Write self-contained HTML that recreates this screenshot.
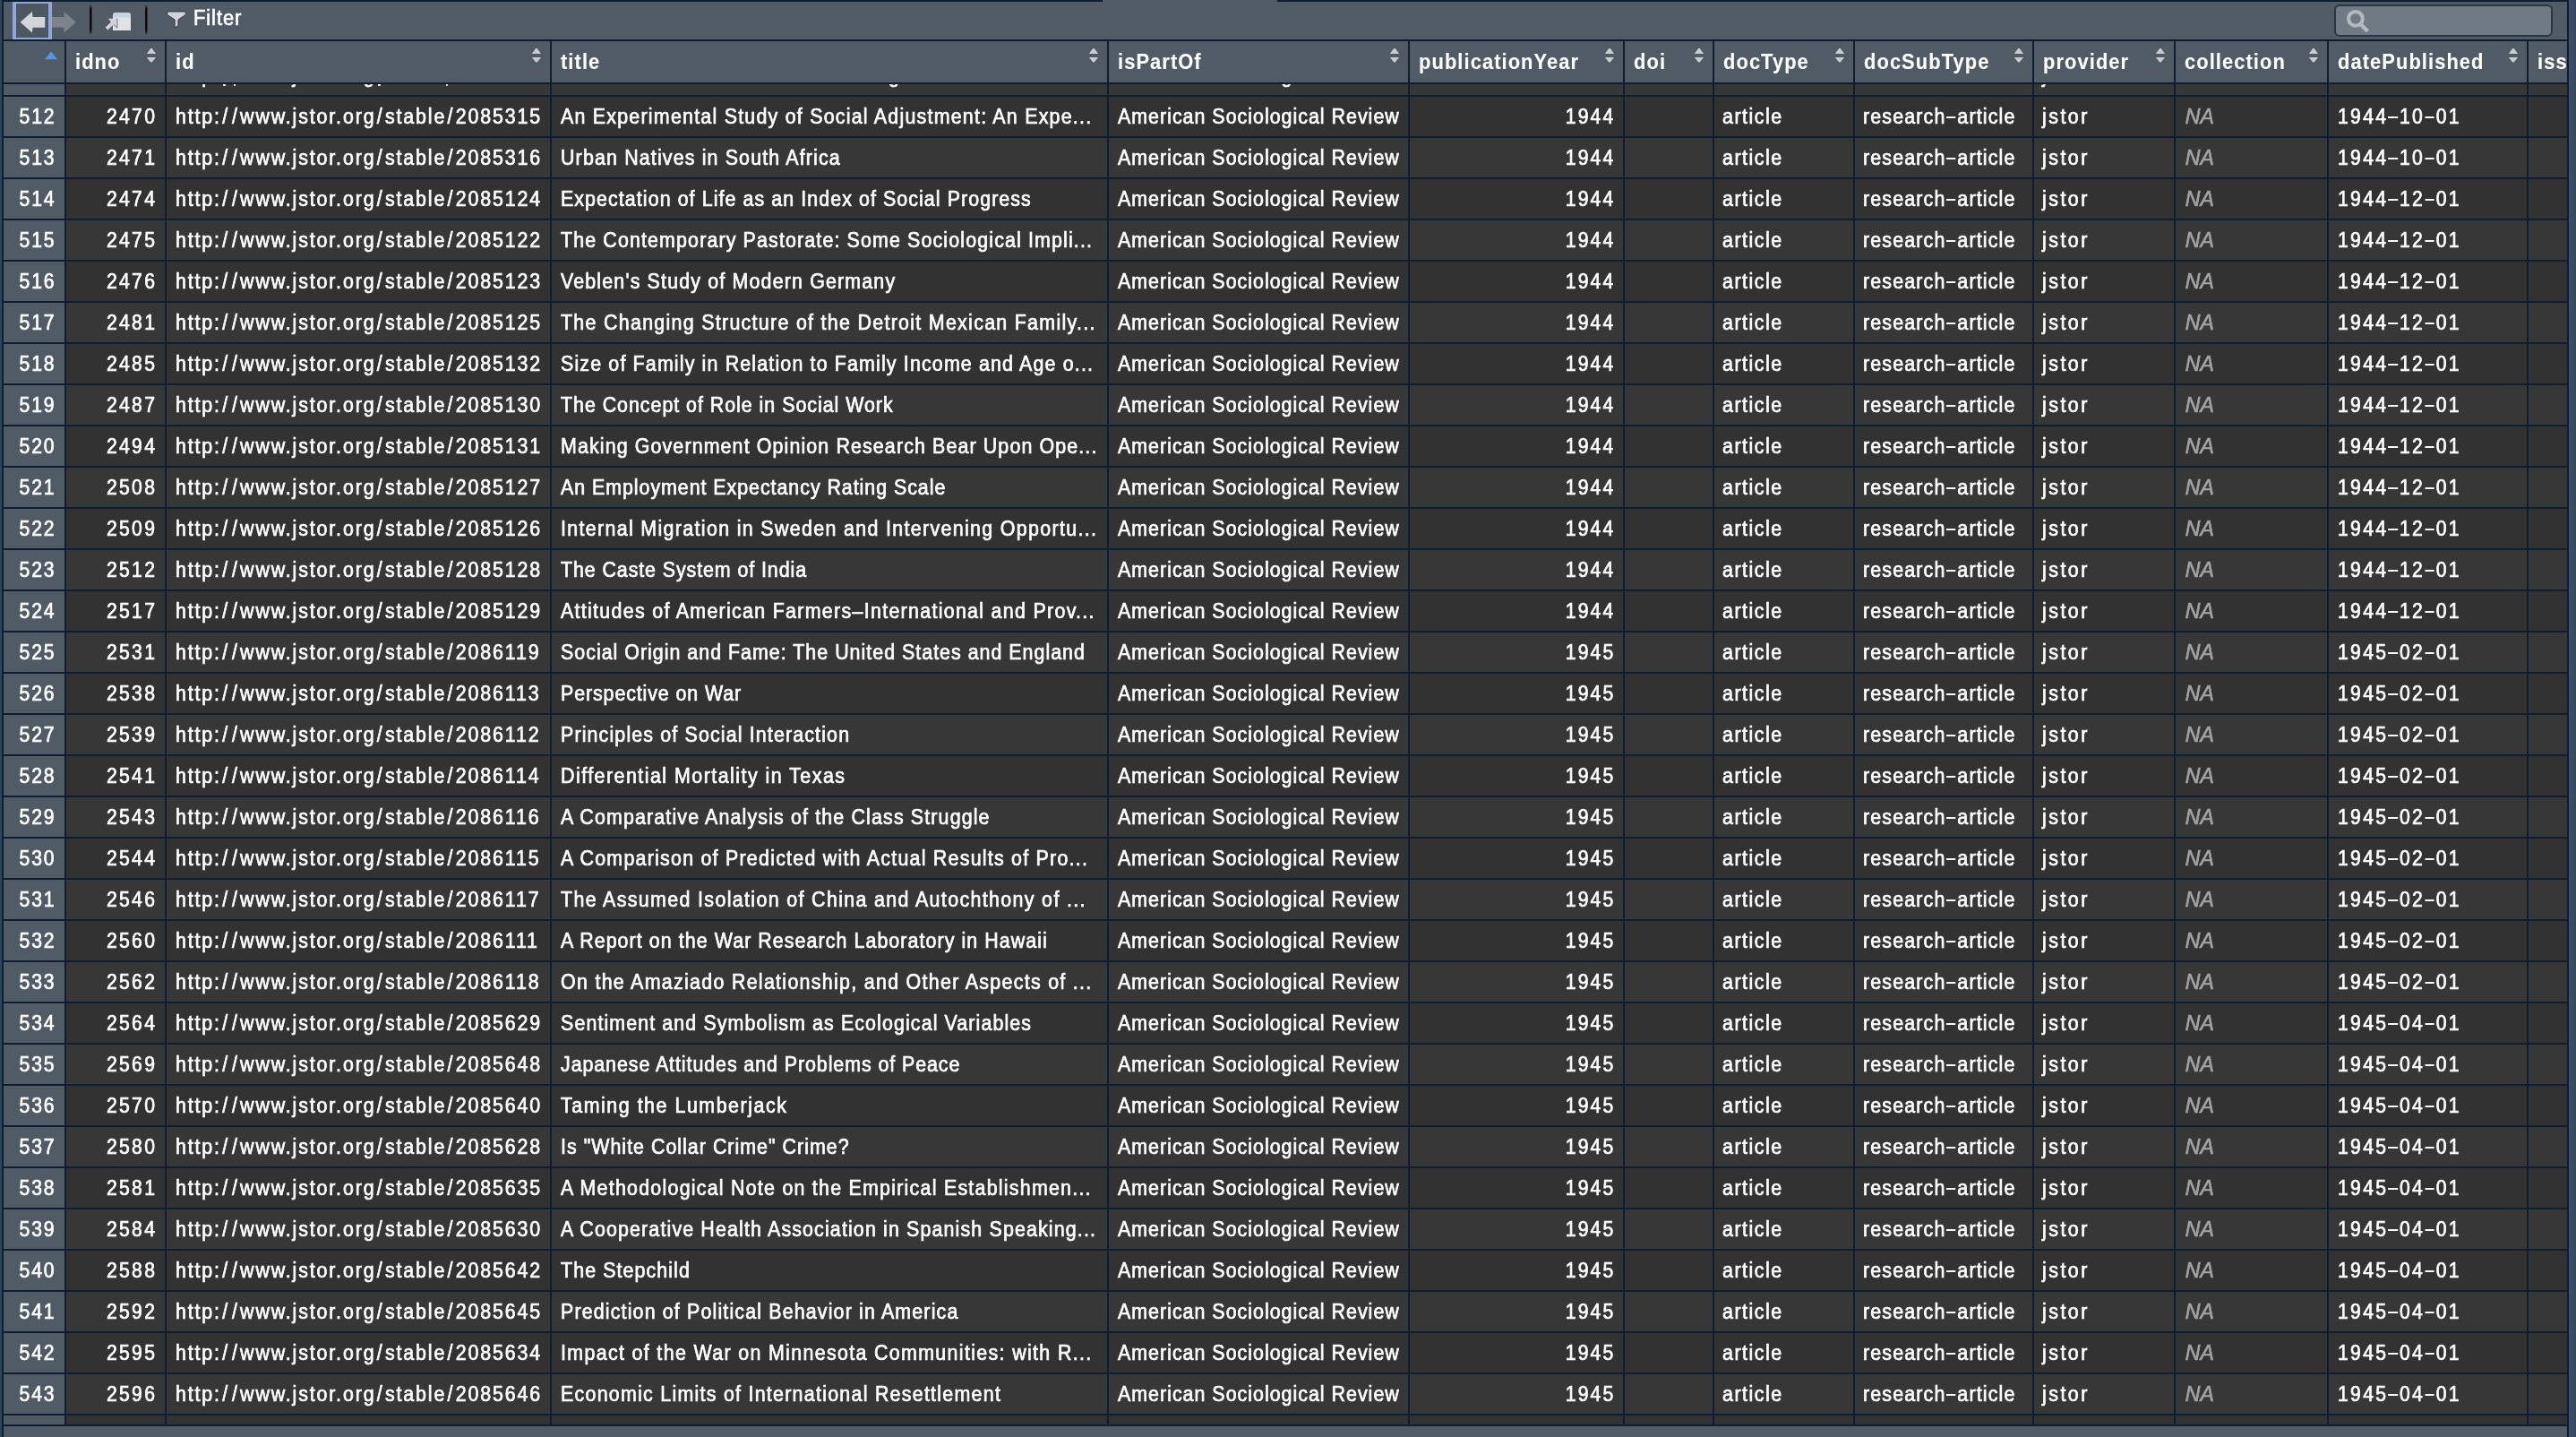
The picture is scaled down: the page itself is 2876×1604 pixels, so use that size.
<!DOCTYPE html><html><head><meta charset="utf-8"><style>
*{box-sizing:border-box}
html,body{margin:0;padding:0}
body{width:2876px;height:1604px;overflow:hidden;position:relative;-webkit-font-smoothing:antialiased;background:#33455d;font-family:"Liberation Sans",sans-serif;color:#fff}
.a{position:absolute}
.s{display:inline-block;white-space:pre;-webkit-text-stroke:0.7px currentColor}
.c{position:absolute;top:0;height:44px;overflow:hidden;font-size:23px;line-height:44px}
.c .t{position:absolute;top:0;left:0;right:0;height:44px;white-space:pre}
.h{position:absolute;top:0;height:46px;background:#515b66;overflow:hidden}
.h .t{position:absolute;left:10px;top:0;line-height:46px;font-size:23px;font-weight:bold;white-space:pre}
.h .s{-webkit-text-stroke:0.1px currentColor}
.sort{position:absolute;top:7px;width:12px;height:18px}
.na{color:#a2a2a2;font-style:italic}
.sl{font-style:normal;margin:0 1.5px}
.dh{display:inline-block;width:11.2px;height:2px;background:currentColor;vertical-align:5.6px;margin:0 2.3px 0 0.3px}
</style></head><body><div id="root" style="position:absolute;left:0;top:0;width:2876px;height:1604px;overflow:hidden;will-change:transform">

<div class="a" style="left:2868px;top:0;width:8px;height:1604px;background:linear-gradient(to right,#3e4f67,#36475e)"></div>
<div class="a" style="left:2px;top:0;width:2866px;height:1604px;background:#0f1d30"></div>
<div class="a" style="left:4px;top:2px;width:2862px;height:42px;background:#515b66"></div>
<div class="a" style="left:1231px;top:0;width:195px;height:2px;background:#515b66"></div>
<div class="a" style="left:14px;top:2px;width:44px;height:42px;border-style:solid;border-color:#8fa8db;border-width:2px 4px;background:#4e5863"></div>
<svg class="a" style="left:0;top:0" width="300" height="46" viewBox="0 0 300 46">
<defs><linearGradient id="sep" x1="0" y1="0" x2="0" y2="1"><stop offset="0" stop-color="#000" stop-opacity="0"/><stop offset="0.15" stop-color="#000"/><stop offset="0.85" stop-color="#000"/><stop offset="1" stop-color="#000" stop-opacity="0"/></linearGradient></defs>
<polygon points="22.6,24.8 35.9,13.1 36.5,18.9 50.2,18.9 50.2,30.7 36.5,30.7 35.9,36.5" fill="#d4d5d7"/>
<polygon points="58,18.9 71.5,18.9 71.5,13.1 84.8,24.8 71.5,36.5 71.5,30.7 58,30.7" fill="#7c838b"/>
<rect x="100.2" y="5" width="2.2" height="34" fill="url(#sep)"/>
<rect x="162.2" y="5" width="2.2" height="34" fill="url(#sep)"/>
<path d="M125.9,33.9 V17.6 A3.7,3.7 0 0 1 129.6,13.9 H142.3 A3.7,3.7 0 0 1 146,17.6 V33.9 Z" fill="#e2e2e4"/>
<path d="M125.9,19.6 V17.6 A3.7,3.7 0 0 1 129.6,13.9 H142.3 A3.7,3.7 0 0 1 146,17.6 V19.6 Z" fill="#c6d3e3"/>
<polygon points="120.6,20.8 130.4,20.8 130.4,30.6 126.8,27.2 120.4,33.5 117.6,30.7 124,24.4" fill="#d2d2d6"/><path d="M130.9,20.6 V31.2 L126.8,27.6" fill="none" stroke="#5b6672" stroke-width="0.9" stroke-linejoin="round"/>
<polygon points="186.8,13 207.2,13 207.2,16.5 199,21.9 199,28.9 195.1,30.8 195.1,21.9 186.8,16.5" fill="#d2d4d7" stroke="#2f3a46" stroke-width="1" stroke-linejoin="round"/>
</svg>
<div class="a" style="left:216px;top:0px;height:40px;line-height:40px;font-size:23px;color:#fff"><span class="s " style="transform:scaleX(0.95);transform-origin:left;letter-spacing:1.0px">Filter</span></div>
<div class="a" style="left:2606px;top:5px;width:244px;height:36px;border:2px solid #2a3645;border-radius:6px;background:#6f7a84"></div>
<svg class="a" style="left:2600px;top:0" width="60" height="46" viewBox="0 0 60 46"><circle cx="29.9" cy="20.8" r="7.9" fill="none" stroke="#b4b9be" stroke-width="4"/><line x1="34.5" y1="26" x2="43.5" y2="35" stroke="#b4b9be" stroke-width="4.5"/></svg>
<div class="a" style="left:4px;top:1592px;width:2862px;height:12px;background:#515b66"></div>
<div class="a" style="left:0;top:46px;width:2866px;height:46px;overflow:hidden">
<div class="h" style="left:4px;width:68px"><svg class="a" style="left:46px;top:11px" width="20" height="12" viewBox="0 0 20 12"><polygon points="0,9.2 6.3,0.9 7.5,0.9 14.2,9.2" fill="#4f97e4"/></svg></div>
<div class="h" style="left:74px;width:110px"><div class="t"><span class="s " style="transform:scaleX(0.95);transform-origin:left;letter-spacing:1.15px">idno</span></div><svg class="a" style="left:89px;top:7px" width="12" height="18" viewBox="0 0 12 18"><polygon points="0.8,6.9 5.2,0.9 6.7,0.9 11.1,6.9" fill="#c8ccd1"/><polygon points="0.8,10.9 11.1,10.9 6.7,16.6 5.2,16.6" fill="#c8ccd1"/></svg></div>
<div class="h" style="left:186px;width:428px"><div class="t"><span class="s " style="transform:scaleX(0.95);transform-origin:left;letter-spacing:1.15px">id</span></div><svg class="a" style="left:407px;top:7px" width="12" height="18" viewBox="0 0 12 18"><polygon points="0.8,6.9 5.2,0.9 6.7,0.9 11.1,6.9" fill="#c8ccd1"/><polygon points="0.8,10.9 11.1,10.9 6.7,16.6 5.2,16.6" fill="#c8ccd1"/></svg></div>
<div class="h" style="left:616px;width:620px"><div class="t"><span class="s " style="transform:scaleX(0.95);transform-origin:left;letter-spacing:1.15px">title</span></div><svg class="a" style="left:599px;top:7px" width="12" height="18" viewBox="0 0 12 18"><polygon points="0.8,6.9 5.2,0.9 6.7,0.9 11.1,6.9" fill="#c8ccd1"/><polygon points="0.8,10.9 11.1,10.9 6.7,16.6 5.2,16.6" fill="#c8ccd1"/></svg></div>
<div class="h" style="left:1238px;width:334px"><div class="t"><span class="s " style="transform:scaleX(0.95);transform-origin:left;letter-spacing:1.15px">isPartOf</span></div><svg class="a" style="left:313px;top:7px" width="12" height="18" viewBox="0 0 12 18"><polygon points="0.8,6.9 5.2,0.9 6.7,0.9 11.1,6.9" fill="#c8ccd1"/><polygon points="0.8,10.9 11.1,10.9 6.7,16.6 5.2,16.6" fill="#c8ccd1"/></svg></div>
<div class="h" style="left:1574px;width:238px"><div class="t"><span class="s " style="transform:scaleX(0.95);transform-origin:left;letter-spacing:1.15px">publicationYear</span></div><svg class="a" style="left:217px;top:7px" width="12" height="18" viewBox="0 0 12 18"><polygon points="0.8,6.9 5.2,0.9 6.7,0.9 11.1,6.9" fill="#c8ccd1"/><polygon points="0.8,10.9 11.1,10.9 6.7,16.6 5.2,16.6" fill="#c8ccd1"/></svg></div>
<div class="h" style="left:1814px;width:98px"><div class="t"><span class="s " style="transform:scaleX(0.95);transform-origin:left;letter-spacing:1.15px">doi</span></div><svg class="a" style="left:77px;top:7px" width="12" height="18" viewBox="0 0 12 18"><polygon points="0.8,6.9 5.2,0.9 6.7,0.9 11.1,6.9" fill="#c8ccd1"/><polygon points="0.8,10.9 11.1,10.9 6.7,16.6 5.2,16.6" fill="#c8ccd1"/></svg></div>
<div class="h" style="left:1914px;width:155px"><div class="t"><span class="s " style="transform:scaleX(0.95);transform-origin:left;letter-spacing:1.15px">docType</span></div><svg class="a" style="left:134px;top:7px" width="12" height="18" viewBox="0 0 12 18"><polygon points="0.8,6.9 5.2,0.9 6.7,0.9 11.1,6.9" fill="#c8ccd1"/><polygon points="0.8,10.9 11.1,10.9 6.7,16.6 5.2,16.6" fill="#c8ccd1"/></svg></div>
<div class="h" style="left:2071px;width:198px"><div class="t"><span class="s " style="transform:scaleX(0.95);transform-origin:left;letter-spacing:1.15px">docSubType</span></div><svg class="a" style="left:177px;top:7px" width="12" height="18" viewBox="0 0 12 18"><polygon points="0.8,6.9 5.2,0.9 6.7,0.9 11.1,6.9" fill="#c8ccd1"/><polygon points="0.8,10.9 11.1,10.9 6.7,16.6 5.2,16.6" fill="#c8ccd1"/></svg></div>
<div class="h" style="left:2271px;width:156px"><div class="t"><span class="s " style="transform:scaleX(0.95);transform-origin:left;letter-spacing:1.15px">provider</span></div><svg class="a" style="left:135px;top:7px" width="12" height="18" viewBox="0 0 12 18"><polygon points="0.8,6.9 5.2,0.9 6.7,0.9 11.1,6.9" fill="#c8ccd1"/><polygon points="0.8,10.9 11.1,10.9 6.7,16.6 5.2,16.6" fill="#c8ccd1"/></svg></div>
<div class="h" style="left:2429px;width:169px"><div class="t"><span class="s " style="transform:scaleX(0.95);transform-origin:left;letter-spacing:1.15px">collection</span></div><svg class="a" style="left:148px;top:7px" width="12" height="18" viewBox="0 0 12 18"><polygon points="0.8,6.9 5.2,0.9 6.7,0.9 11.1,6.9" fill="#c8ccd1"/><polygon points="0.8,10.9 11.1,10.9 6.7,16.6 5.2,16.6" fill="#c8ccd1"/></svg></div>
<div class="h" style="left:2600px;width:221px"><div class="t"><span class="s " style="transform:scaleX(0.95);transform-origin:left;letter-spacing:1.15px">datePublished</span></div><svg class="a" style="left:200px;top:7px" width="12" height="18" viewBox="0 0 12 18"><polygon points="0.8,6.9 5.2,0.9 6.7,0.9 11.1,6.9" fill="#c8ccd1"/><polygon points="0.8,10.9 11.1,10.9 6.7,16.6 5.2,16.6" fill="#c8ccd1"/></svg></div>
<div class="h" style="left:2823px;width:77px"><div class="t"><span class="s " style="transform:scaleX(0.95);transform-origin:left;letter-spacing:1.15px">iss</span></div></div>
</div>
<div class="a" style="left:0;top:94px;width:2866px;height:1496px;overflow:hidden">
<div class="a" style="left:0;top:-32px;width:2866px;height:44px"><div class="c" style="left:4px;width:68px;background:#515b66"><div class="t" style="right:9px;text-align:right"><span class="s " style="transform:scaleX(0.92);transform-origin:right;letter-spacing:2.05px">511</span></div></div><div class="c" style="left:74px;width:110px;background:#373737"><div class="t" style="right:8.5px;text-align:right"><span class="s " style="transform:scaleX(0.92);transform-origin:right;letter-spacing:2.533px">2469</span></div></div><div class="c" style="left:186px;width:428px;background:#373737"><div class="t" style="left:10px"><span class="s " style="transform:scaleX(0.93);transform-origin:left;letter-spacing:1.994px">http:<i class="sl">/</i><i class="sl">/</i>www.jstor.org<i class="sl">/</i>stable<i class="sl">/</i>2085314</span></div></div><div class="c" style="left:616px;width:620px;background:#373737"><div class="t" style="left:376px"><span class="s " style="transform:scaleX(0.93);transform-origin:left;letter-spacing:1.2px">g</span></div></div><div class="c" style="left:1238px;width:334px;background:#373737"><div class="t" style="left:10px"><span class="s " style="transform:scaleX(0.93);transform-origin:left;letter-spacing:1.084px">American Sociological Review</span></div></div><div class="c" style="left:1574px;width:238px;background:#373737"><div class="t" style="right:8.8px;text-align:right"><span class="s " style="transform:scaleX(0.92);transform-origin:right;letter-spacing:2.3px">1944</span></div></div><div class="c" style="left:1814px;width:98px;background:#373737"></div><div class="c" style="left:1914px;width:155px;background:#373737"><div class="t" style="left:9px"><span class="s " style="transform:scaleX(0.93);transform-origin:left;letter-spacing:1.62px">article</span></div></div><div class="c" style="left:2071px;width:198px;background:#373737"><div class="t" style="left:9px"><span class="s " style="transform:scaleX(0.93);transform-origin:left;letter-spacing:1.25px">research<i class="dh"></i>article</span></div></div><div class="c" style="left:2271px;width:156px;background:#373737"><div class="t" style="left:9px"><span class="s " style="transform:scaleX(0.93);transform-origin:left;letter-spacing:2.667px">jstor</span></div></div><div class="c" style="left:2429px;width:169px;background:#373737"><div class="t na" style="left:10.7px"><span class="s " style="transform:scaleX(1.0);transform-origin:left;letter-spacing:0.3px">NA</span></div></div><div class="c" style="left:2600px;width:221px;background:#373737"><div class="t" style="left:10px"><span class="s " style="transform:scaleX(0.92);transform-origin:left;letter-spacing:2.5px">1944<i class="dh"></i>10<i class="dh"></i>01</span></div></div><div class="c" style="left:2823px;width:77px;background:#373737"></div></div>
<div class="a" style="left:0;top:14px;width:2866px;height:44px"><div class="c" style="left:4px;width:68px;background:#515b66"><div class="t" style="right:9px;text-align:right"><span class="s " style="transform:scaleX(0.92);transform-origin:right;letter-spacing:2.05px">512</span></div></div><div class="c" style="left:74px;width:110px;background:#323232"><div class="t" style="right:8.5px;text-align:right"><span class="s " style="transform:scaleX(0.92);transform-origin:right;letter-spacing:2.533px">2470</span></div></div><div class="c" style="left:186px;width:428px;background:#323232"><div class="t" style="left:10px"><span class="s " style="transform:scaleX(0.93);transform-origin:left;letter-spacing:1.994px">http:<i class="sl">/</i><i class="sl">/</i>www.jstor.org<i class="sl">/</i>stable<i class="sl">/</i>2085315</span></div></div><div class="c" style="left:616px;width:620px;background:#323232"><div class="t" style="left:10px"><span class="s" style="transform:scaleX(0.93);transform-origin:left;letter-spacing:1.327px">An Experimental Study of Social Adjustment: An Expe...</span></div></div><div class="c" style="left:1238px;width:334px;background:#323232"><div class="t" style="left:10px"><span class="s " style="transform:scaleX(0.93);transform-origin:left;letter-spacing:1.084px">American Sociological Review</span></div></div><div class="c" style="left:1574px;width:238px;background:#323232"><div class="t" style="right:8.8px;text-align:right"><span class="s " style="transform:scaleX(0.92);transform-origin:right;letter-spacing:2.3px">1944</span></div></div><div class="c" style="left:1814px;width:98px;background:#323232"></div><div class="c" style="left:1914px;width:155px;background:#323232"><div class="t" style="left:9px"><span class="s " style="transform:scaleX(0.93);transform-origin:left;letter-spacing:1.62px">article</span></div></div><div class="c" style="left:2071px;width:198px;background:#323232"><div class="t" style="left:9px"><span class="s " style="transform:scaleX(0.93);transform-origin:left;letter-spacing:1.25px">research<i class="dh"></i>article</span></div></div><div class="c" style="left:2271px;width:156px;background:#323232"><div class="t" style="left:9px"><span class="s " style="transform:scaleX(0.93);transform-origin:left;letter-spacing:2.667px">jstor</span></div></div><div class="c" style="left:2429px;width:169px;background:#323232"><div class="t na" style="left:10.7px"><span class="s " style="transform:scaleX(1.0);transform-origin:left;letter-spacing:0.3px">NA</span></div></div><div class="c" style="left:2600px;width:221px;background:#323232"><div class="t" style="left:10px"><span class="s " style="transform:scaleX(0.92);transform-origin:left;letter-spacing:2.5px">1944<i class="dh"></i>10<i class="dh"></i>01</span></div></div><div class="c" style="left:2823px;width:77px;background:#323232"></div></div>
<div class="a" style="left:0;top:60px;width:2866px;height:44px"><div class="c" style="left:4px;width:68px;background:#515b66"><div class="t" style="right:9px;text-align:right"><span class="s " style="transform:scaleX(0.92);transform-origin:right;letter-spacing:2.05px">513</span></div></div><div class="c" style="left:74px;width:110px;background:#373737"><div class="t" style="right:8.5px;text-align:right"><span class="s " style="transform:scaleX(0.92);transform-origin:right;letter-spacing:2.533px">2471</span></div></div><div class="c" style="left:186px;width:428px;background:#373737"><div class="t" style="left:10px"><span class="s " style="transform:scaleX(0.93);transform-origin:left;letter-spacing:1.994px">http:<i class="sl">/</i><i class="sl">/</i>www.jstor.org<i class="sl">/</i>stable<i class="sl">/</i>2085316</span></div></div><div class="c" style="left:616px;width:620px;background:#373737"><div class="t" style="left:10px"><span class="s" style="transform:scaleX(0.93);transform-origin:left;letter-spacing:1.242px">Urban Natives in South Africa</span></div></div><div class="c" style="left:1238px;width:334px;background:#373737"><div class="t" style="left:10px"><span class="s " style="transform:scaleX(0.93);transform-origin:left;letter-spacing:1.084px">American Sociological Review</span></div></div><div class="c" style="left:1574px;width:238px;background:#373737"><div class="t" style="right:8.8px;text-align:right"><span class="s " style="transform:scaleX(0.92);transform-origin:right;letter-spacing:2.3px">1944</span></div></div><div class="c" style="left:1814px;width:98px;background:#373737"></div><div class="c" style="left:1914px;width:155px;background:#373737"><div class="t" style="left:9px"><span class="s " style="transform:scaleX(0.93);transform-origin:left;letter-spacing:1.62px">article</span></div></div><div class="c" style="left:2071px;width:198px;background:#373737"><div class="t" style="left:9px"><span class="s " style="transform:scaleX(0.93);transform-origin:left;letter-spacing:1.25px">research<i class="dh"></i>article</span></div></div><div class="c" style="left:2271px;width:156px;background:#373737"><div class="t" style="left:9px"><span class="s " style="transform:scaleX(0.93);transform-origin:left;letter-spacing:2.667px">jstor</span></div></div><div class="c" style="left:2429px;width:169px;background:#373737"><div class="t na" style="left:10.7px"><span class="s " style="transform:scaleX(1.0);transform-origin:left;letter-spacing:0.3px">NA</span></div></div><div class="c" style="left:2600px;width:221px;background:#373737"><div class="t" style="left:10px"><span class="s " style="transform:scaleX(0.92);transform-origin:left;letter-spacing:2.5px">1944<i class="dh"></i>10<i class="dh"></i>01</span></div></div><div class="c" style="left:2823px;width:77px;background:#373737"></div></div>
<div class="a" style="left:0;top:106px;width:2866px;height:44px"><div class="c" style="left:4px;width:68px;background:#515b66"><div class="t" style="right:9px;text-align:right"><span class="s " style="transform:scaleX(0.92);transform-origin:right;letter-spacing:2.05px">514</span></div></div><div class="c" style="left:74px;width:110px;background:#323232"><div class="t" style="right:8.5px;text-align:right"><span class="s " style="transform:scaleX(0.92);transform-origin:right;letter-spacing:2.533px">2474</span></div></div><div class="c" style="left:186px;width:428px;background:#323232"><div class="t" style="left:10px"><span class="s " style="transform:scaleX(0.93);transform-origin:left;letter-spacing:1.994px">http:<i class="sl">/</i><i class="sl">/</i>www.jstor.org<i class="sl">/</i>stable<i class="sl">/</i>2085124</span></div></div><div class="c" style="left:616px;width:620px;background:#323232"><div class="t" style="left:10px"><span class="s" style="transform:scaleX(0.93);transform-origin:left;letter-spacing:1.158px">Expectation of Life as an Index of Social Progress</span></div></div><div class="c" style="left:1238px;width:334px;background:#323232"><div class="t" style="left:10px"><span class="s " style="transform:scaleX(0.93);transform-origin:left;letter-spacing:1.084px">American Sociological Review</span></div></div><div class="c" style="left:1574px;width:238px;background:#323232"><div class="t" style="right:8.8px;text-align:right"><span class="s " style="transform:scaleX(0.92);transform-origin:right;letter-spacing:2.3px">1944</span></div></div><div class="c" style="left:1814px;width:98px;background:#323232"></div><div class="c" style="left:1914px;width:155px;background:#323232"><div class="t" style="left:9px"><span class="s " style="transform:scaleX(0.93);transform-origin:left;letter-spacing:1.62px">article</span></div></div><div class="c" style="left:2071px;width:198px;background:#323232"><div class="t" style="left:9px"><span class="s " style="transform:scaleX(0.93);transform-origin:left;letter-spacing:1.25px">research<i class="dh"></i>article</span></div></div><div class="c" style="left:2271px;width:156px;background:#323232"><div class="t" style="left:9px"><span class="s " style="transform:scaleX(0.93);transform-origin:left;letter-spacing:2.667px">jstor</span></div></div><div class="c" style="left:2429px;width:169px;background:#323232"><div class="t na" style="left:10.7px"><span class="s " style="transform:scaleX(1.0);transform-origin:left;letter-spacing:0.3px">NA</span></div></div><div class="c" style="left:2600px;width:221px;background:#323232"><div class="t" style="left:10px"><span class="s " style="transform:scaleX(0.92);transform-origin:left;letter-spacing:2.5px">1944<i class="dh"></i>12<i class="dh"></i>01</span></div></div><div class="c" style="left:2823px;width:77px;background:#323232"></div></div>
<div class="a" style="left:0;top:152px;width:2866px;height:44px"><div class="c" style="left:4px;width:68px;background:#515b66"><div class="t" style="right:9px;text-align:right"><span class="s " style="transform:scaleX(0.92);transform-origin:right;letter-spacing:2.05px">515</span></div></div><div class="c" style="left:74px;width:110px;background:#373737"><div class="t" style="right:8.5px;text-align:right"><span class="s " style="transform:scaleX(0.92);transform-origin:right;letter-spacing:2.533px">2475</span></div></div><div class="c" style="left:186px;width:428px;background:#373737"><div class="t" style="left:10px"><span class="s " style="transform:scaleX(0.93);transform-origin:left;letter-spacing:1.994px">http:<i class="sl">/</i><i class="sl">/</i>www.jstor.org<i class="sl">/</i>stable<i class="sl">/</i>2085122</span></div></div><div class="c" style="left:616px;width:620px;background:#373737"><div class="t" style="left:10px"><span class="s" style="transform:scaleX(0.93);transform-origin:left;letter-spacing:1.224px">The Contemporary Pastorate: Some Sociological Impli...</span></div></div><div class="c" style="left:1238px;width:334px;background:#373737"><div class="t" style="left:10px"><span class="s " style="transform:scaleX(0.93);transform-origin:left;letter-spacing:1.084px">American Sociological Review</span></div></div><div class="c" style="left:1574px;width:238px;background:#373737"><div class="t" style="right:8.8px;text-align:right"><span class="s " style="transform:scaleX(0.92);transform-origin:right;letter-spacing:2.3px">1944</span></div></div><div class="c" style="left:1814px;width:98px;background:#373737"></div><div class="c" style="left:1914px;width:155px;background:#373737"><div class="t" style="left:9px"><span class="s " style="transform:scaleX(0.93);transform-origin:left;letter-spacing:1.62px">article</span></div></div><div class="c" style="left:2071px;width:198px;background:#373737"><div class="t" style="left:9px"><span class="s " style="transform:scaleX(0.93);transform-origin:left;letter-spacing:1.25px">research<i class="dh"></i>article</span></div></div><div class="c" style="left:2271px;width:156px;background:#373737"><div class="t" style="left:9px"><span class="s " style="transform:scaleX(0.93);transform-origin:left;letter-spacing:2.667px">jstor</span></div></div><div class="c" style="left:2429px;width:169px;background:#373737"><div class="t na" style="left:10.7px"><span class="s " style="transform:scaleX(1.0);transform-origin:left;letter-spacing:0.3px">NA</span></div></div><div class="c" style="left:2600px;width:221px;background:#373737"><div class="t" style="left:10px"><span class="s " style="transform:scaleX(0.92);transform-origin:left;letter-spacing:2.5px">1944<i class="dh"></i>12<i class="dh"></i>01</span></div></div><div class="c" style="left:2823px;width:77px;background:#373737"></div></div>
<div class="a" style="left:0;top:198px;width:2866px;height:44px"><div class="c" style="left:4px;width:68px;background:#515b66"><div class="t" style="right:9px;text-align:right"><span class="s " style="transform:scaleX(0.92);transform-origin:right;letter-spacing:2.05px">516</span></div></div><div class="c" style="left:74px;width:110px;background:#323232"><div class="t" style="right:8.5px;text-align:right"><span class="s " style="transform:scaleX(0.92);transform-origin:right;letter-spacing:2.533px">2476</span></div></div><div class="c" style="left:186px;width:428px;background:#323232"><div class="t" style="left:10px"><span class="s " style="transform:scaleX(0.93);transform-origin:left;letter-spacing:1.994px">http:<i class="sl">/</i><i class="sl">/</i>www.jstor.org<i class="sl">/</i>stable<i class="sl">/</i>2085123</span></div></div><div class="c" style="left:616px;width:620px;background:#323232"><div class="t" style="left:10px"><span class="s" style="transform:scaleX(0.93);transform-origin:left;letter-spacing:1.252px">Veblen&#x27;s Study of Modern Germany</span></div></div><div class="c" style="left:1238px;width:334px;background:#323232"><div class="t" style="left:10px"><span class="s " style="transform:scaleX(0.93);transform-origin:left;letter-spacing:1.084px">American Sociological Review</span></div></div><div class="c" style="left:1574px;width:238px;background:#323232"><div class="t" style="right:8.8px;text-align:right"><span class="s " style="transform:scaleX(0.92);transform-origin:right;letter-spacing:2.3px">1944</span></div></div><div class="c" style="left:1814px;width:98px;background:#323232"></div><div class="c" style="left:1914px;width:155px;background:#323232"><div class="t" style="left:9px"><span class="s " style="transform:scaleX(0.93);transform-origin:left;letter-spacing:1.62px">article</span></div></div><div class="c" style="left:2071px;width:198px;background:#323232"><div class="t" style="left:9px"><span class="s " style="transform:scaleX(0.93);transform-origin:left;letter-spacing:1.25px">research<i class="dh"></i>article</span></div></div><div class="c" style="left:2271px;width:156px;background:#323232"><div class="t" style="left:9px"><span class="s " style="transform:scaleX(0.93);transform-origin:left;letter-spacing:2.667px">jstor</span></div></div><div class="c" style="left:2429px;width:169px;background:#323232"><div class="t na" style="left:10.7px"><span class="s " style="transform:scaleX(1.0);transform-origin:left;letter-spacing:0.3px">NA</span></div></div><div class="c" style="left:2600px;width:221px;background:#323232"><div class="t" style="left:10px"><span class="s " style="transform:scaleX(0.92);transform-origin:left;letter-spacing:2.5px">1944<i class="dh"></i>12<i class="dh"></i>01</span></div></div><div class="c" style="left:2823px;width:77px;background:#323232"></div></div>
<div class="a" style="left:0;top:244px;width:2866px;height:44px"><div class="c" style="left:4px;width:68px;background:#515b66"><div class="t" style="right:9px;text-align:right"><span class="s " style="transform:scaleX(0.92);transform-origin:right;letter-spacing:2.05px">517</span></div></div><div class="c" style="left:74px;width:110px;background:#373737"><div class="t" style="right:8.5px;text-align:right"><span class="s " style="transform:scaleX(0.92);transform-origin:right;letter-spacing:2.533px">2481</span></div></div><div class="c" style="left:186px;width:428px;background:#373737"><div class="t" style="left:10px"><span class="s " style="transform:scaleX(0.93);transform-origin:left;letter-spacing:1.994px">http:<i class="sl">/</i><i class="sl">/</i>www.jstor.org<i class="sl">/</i>stable<i class="sl">/</i>2085125</span></div></div><div class="c" style="left:616px;width:620px;background:#373737"><div class="t" style="left:10px"><span class="s" style="transform:scaleX(0.93);transform-origin:left;letter-spacing:1.396px">The Changing Structure of the Detroit Mexican Family...</span></div></div><div class="c" style="left:1238px;width:334px;background:#373737"><div class="t" style="left:10px"><span class="s " style="transform:scaleX(0.93);transform-origin:left;letter-spacing:1.084px">American Sociological Review</span></div></div><div class="c" style="left:1574px;width:238px;background:#373737"><div class="t" style="right:8.8px;text-align:right"><span class="s " style="transform:scaleX(0.92);transform-origin:right;letter-spacing:2.3px">1944</span></div></div><div class="c" style="left:1814px;width:98px;background:#373737"></div><div class="c" style="left:1914px;width:155px;background:#373737"><div class="t" style="left:9px"><span class="s " style="transform:scaleX(0.93);transform-origin:left;letter-spacing:1.62px">article</span></div></div><div class="c" style="left:2071px;width:198px;background:#373737"><div class="t" style="left:9px"><span class="s " style="transform:scaleX(0.93);transform-origin:left;letter-spacing:1.25px">research<i class="dh"></i>article</span></div></div><div class="c" style="left:2271px;width:156px;background:#373737"><div class="t" style="left:9px"><span class="s " style="transform:scaleX(0.93);transform-origin:left;letter-spacing:2.667px">jstor</span></div></div><div class="c" style="left:2429px;width:169px;background:#373737"><div class="t na" style="left:10.7px"><span class="s " style="transform:scaleX(1.0);transform-origin:left;letter-spacing:0.3px">NA</span></div></div><div class="c" style="left:2600px;width:221px;background:#373737"><div class="t" style="left:10px"><span class="s " style="transform:scaleX(0.92);transform-origin:left;letter-spacing:2.5px">1944<i class="dh"></i>12<i class="dh"></i>01</span></div></div><div class="c" style="left:2823px;width:77px;background:#373737"></div></div>
<div class="a" style="left:0;top:290px;width:2866px;height:44px"><div class="c" style="left:4px;width:68px;background:#515b66"><div class="t" style="right:9px;text-align:right"><span class="s " style="transform:scaleX(0.92);transform-origin:right;letter-spacing:2.05px">518</span></div></div><div class="c" style="left:74px;width:110px;background:#323232"><div class="t" style="right:8.5px;text-align:right"><span class="s " style="transform:scaleX(0.92);transform-origin:right;letter-spacing:2.533px">2485</span></div></div><div class="c" style="left:186px;width:428px;background:#323232"><div class="t" style="left:10px"><span class="s " style="transform:scaleX(0.93);transform-origin:left;letter-spacing:1.994px">http:<i class="sl">/</i><i class="sl">/</i>www.jstor.org<i class="sl">/</i>stable<i class="sl">/</i>2085132</span></div></div><div class="c" style="left:616px;width:620px;background:#323232"><div class="t" style="left:10px"><span class="s" style="transform:scaleX(0.93);transform-origin:left;letter-spacing:1.245px">Size of Family in Relation to Family Income and Age o...</span></div></div><div class="c" style="left:1238px;width:334px;background:#323232"><div class="t" style="left:10px"><span class="s " style="transform:scaleX(0.93);transform-origin:left;letter-spacing:1.084px">American Sociological Review</span></div></div><div class="c" style="left:1574px;width:238px;background:#323232"><div class="t" style="right:8.8px;text-align:right"><span class="s " style="transform:scaleX(0.92);transform-origin:right;letter-spacing:2.3px">1944</span></div></div><div class="c" style="left:1814px;width:98px;background:#323232"></div><div class="c" style="left:1914px;width:155px;background:#323232"><div class="t" style="left:9px"><span class="s " style="transform:scaleX(0.93);transform-origin:left;letter-spacing:1.62px">article</span></div></div><div class="c" style="left:2071px;width:198px;background:#323232"><div class="t" style="left:9px"><span class="s " style="transform:scaleX(0.93);transform-origin:left;letter-spacing:1.25px">research<i class="dh"></i>article</span></div></div><div class="c" style="left:2271px;width:156px;background:#323232"><div class="t" style="left:9px"><span class="s " style="transform:scaleX(0.93);transform-origin:left;letter-spacing:2.667px">jstor</span></div></div><div class="c" style="left:2429px;width:169px;background:#323232"><div class="t na" style="left:10.7px"><span class="s " style="transform:scaleX(1.0);transform-origin:left;letter-spacing:0.3px">NA</span></div></div><div class="c" style="left:2600px;width:221px;background:#323232"><div class="t" style="left:10px"><span class="s " style="transform:scaleX(0.92);transform-origin:left;letter-spacing:2.5px">1944<i class="dh"></i>12<i class="dh"></i>01</span></div></div><div class="c" style="left:2823px;width:77px;background:#323232"></div></div>
<div class="a" style="left:0;top:336px;width:2866px;height:44px"><div class="c" style="left:4px;width:68px;background:#515b66"><div class="t" style="right:9px;text-align:right"><span class="s " style="transform:scaleX(0.92);transform-origin:right;letter-spacing:2.05px">519</span></div></div><div class="c" style="left:74px;width:110px;background:#373737"><div class="t" style="right:8.5px;text-align:right"><span class="s " style="transform:scaleX(0.92);transform-origin:right;letter-spacing:2.533px">2487</span></div></div><div class="c" style="left:186px;width:428px;background:#373737"><div class="t" style="left:10px"><span class="s " style="transform:scaleX(0.93);transform-origin:left;letter-spacing:1.994px">http:<i class="sl">/</i><i class="sl">/</i>www.jstor.org<i class="sl">/</i>stable<i class="sl">/</i>2085130</span></div></div><div class="c" style="left:616px;width:620px;background:#373737"><div class="t" style="left:10px"><span class="s" style="transform:scaleX(0.93);transform-origin:left;letter-spacing:1.048px">The Concept of Role in Social Work</span></div></div><div class="c" style="left:1238px;width:334px;background:#373737"><div class="t" style="left:10px"><span class="s " style="transform:scaleX(0.93);transform-origin:left;letter-spacing:1.084px">American Sociological Review</span></div></div><div class="c" style="left:1574px;width:238px;background:#373737"><div class="t" style="right:8.8px;text-align:right"><span class="s " style="transform:scaleX(0.92);transform-origin:right;letter-spacing:2.3px">1944</span></div></div><div class="c" style="left:1814px;width:98px;background:#373737"></div><div class="c" style="left:1914px;width:155px;background:#373737"><div class="t" style="left:9px"><span class="s " style="transform:scaleX(0.93);transform-origin:left;letter-spacing:1.62px">article</span></div></div><div class="c" style="left:2071px;width:198px;background:#373737"><div class="t" style="left:9px"><span class="s " style="transform:scaleX(0.93);transform-origin:left;letter-spacing:1.25px">research<i class="dh"></i>article</span></div></div><div class="c" style="left:2271px;width:156px;background:#373737"><div class="t" style="left:9px"><span class="s " style="transform:scaleX(0.93);transform-origin:left;letter-spacing:2.667px">jstor</span></div></div><div class="c" style="left:2429px;width:169px;background:#373737"><div class="t na" style="left:10.7px"><span class="s " style="transform:scaleX(1.0);transform-origin:left;letter-spacing:0.3px">NA</span></div></div><div class="c" style="left:2600px;width:221px;background:#373737"><div class="t" style="left:10px"><span class="s " style="transform:scaleX(0.92);transform-origin:left;letter-spacing:2.5px">1944<i class="dh"></i>12<i class="dh"></i>01</span></div></div><div class="c" style="left:2823px;width:77px;background:#373737"></div></div>
<div class="a" style="left:0;top:382px;width:2866px;height:44px"><div class="c" style="left:4px;width:68px;background:#515b66"><div class="t" style="right:9px;text-align:right"><span class="s " style="transform:scaleX(0.92);transform-origin:right;letter-spacing:2.05px">520</span></div></div><div class="c" style="left:74px;width:110px;background:#323232"><div class="t" style="right:8.5px;text-align:right"><span class="s " style="transform:scaleX(0.92);transform-origin:right;letter-spacing:2.533px">2494</span></div></div><div class="c" style="left:186px;width:428px;background:#323232"><div class="t" style="left:10px"><span class="s " style="transform:scaleX(0.93);transform-origin:left;letter-spacing:1.994px">http:<i class="sl">/</i><i class="sl">/</i>www.jstor.org<i class="sl">/</i>stable<i class="sl">/</i>2085131</span></div></div><div class="c" style="left:616px;width:620px;background:#323232"><div class="t" style="left:10px"><span class="s" style="transform:scaleX(0.93);transform-origin:left;letter-spacing:1.209px">Making Government Opinion Research Bear Upon Ope...</span></div></div><div class="c" style="left:1238px;width:334px;background:#323232"><div class="t" style="left:10px"><span class="s " style="transform:scaleX(0.93);transform-origin:left;letter-spacing:1.084px">American Sociological Review</span></div></div><div class="c" style="left:1574px;width:238px;background:#323232"><div class="t" style="right:8.8px;text-align:right"><span class="s " style="transform:scaleX(0.92);transform-origin:right;letter-spacing:2.3px">1944</span></div></div><div class="c" style="left:1814px;width:98px;background:#323232"></div><div class="c" style="left:1914px;width:155px;background:#323232"><div class="t" style="left:9px"><span class="s " style="transform:scaleX(0.93);transform-origin:left;letter-spacing:1.62px">article</span></div></div><div class="c" style="left:2071px;width:198px;background:#323232"><div class="t" style="left:9px"><span class="s " style="transform:scaleX(0.93);transform-origin:left;letter-spacing:1.25px">research<i class="dh"></i>article</span></div></div><div class="c" style="left:2271px;width:156px;background:#323232"><div class="t" style="left:9px"><span class="s " style="transform:scaleX(0.93);transform-origin:left;letter-spacing:2.667px">jstor</span></div></div><div class="c" style="left:2429px;width:169px;background:#323232"><div class="t na" style="left:10.7px"><span class="s " style="transform:scaleX(1.0);transform-origin:left;letter-spacing:0.3px">NA</span></div></div><div class="c" style="left:2600px;width:221px;background:#323232"><div class="t" style="left:10px"><span class="s " style="transform:scaleX(0.92);transform-origin:left;letter-spacing:2.5px">1944<i class="dh"></i>12<i class="dh"></i>01</span></div></div><div class="c" style="left:2823px;width:77px;background:#323232"></div></div>
<div class="a" style="left:0;top:428px;width:2866px;height:44px"><div class="c" style="left:4px;width:68px;background:#515b66"><div class="t" style="right:9px;text-align:right"><span class="s " style="transform:scaleX(0.92);transform-origin:right;letter-spacing:2.05px">521</span></div></div><div class="c" style="left:74px;width:110px;background:#373737"><div class="t" style="right:8.5px;text-align:right"><span class="s " style="transform:scaleX(0.92);transform-origin:right;letter-spacing:2.533px">2508</span></div></div><div class="c" style="left:186px;width:428px;background:#373737"><div class="t" style="left:10px"><span class="s " style="transform:scaleX(0.93);transform-origin:left;letter-spacing:1.994px">http:<i class="sl">/</i><i class="sl">/</i>www.jstor.org<i class="sl">/</i>stable<i class="sl">/</i>2085127</span></div></div><div class="c" style="left:616px;width:620px;background:#373737"><div class="t" style="left:10px"><span class="s" style="transform:scaleX(0.93);transform-origin:left;letter-spacing:1.032px">An Employment Expectancy Rating Scale</span></div></div><div class="c" style="left:1238px;width:334px;background:#373737"><div class="t" style="left:10px"><span class="s " style="transform:scaleX(0.93);transform-origin:left;letter-spacing:1.084px">American Sociological Review</span></div></div><div class="c" style="left:1574px;width:238px;background:#373737"><div class="t" style="right:8.8px;text-align:right"><span class="s " style="transform:scaleX(0.92);transform-origin:right;letter-spacing:2.3px">1944</span></div></div><div class="c" style="left:1814px;width:98px;background:#373737"></div><div class="c" style="left:1914px;width:155px;background:#373737"><div class="t" style="left:9px"><span class="s " style="transform:scaleX(0.93);transform-origin:left;letter-spacing:1.62px">article</span></div></div><div class="c" style="left:2071px;width:198px;background:#373737"><div class="t" style="left:9px"><span class="s " style="transform:scaleX(0.93);transform-origin:left;letter-spacing:1.25px">research<i class="dh"></i>article</span></div></div><div class="c" style="left:2271px;width:156px;background:#373737"><div class="t" style="left:9px"><span class="s " style="transform:scaleX(0.93);transform-origin:left;letter-spacing:2.667px">jstor</span></div></div><div class="c" style="left:2429px;width:169px;background:#373737"><div class="t na" style="left:10.7px"><span class="s " style="transform:scaleX(1.0);transform-origin:left;letter-spacing:0.3px">NA</span></div></div><div class="c" style="left:2600px;width:221px;background:#373737"><div class="t" style="left:10px"><span class="s " style="transform:scaleX(0.92);transform-origin:left;letter-spacing:2.5px">1944<i class="dh"></i>12<i class="dh"></i>01</span></div></div><div class="c" style="left:2823px;width:77px;background:#373737"></div></div>
<div class="a" style="left:0;top:474px;width:2866px;height:44px"><div class="c" style="left:4px;width:68px;background:#515b66"><div class="t" style="right:9px;text-align:right"><span class="s " style="transform:scaleX(0.92);transform-origin:right;letter-spacing:2.05px">522</span></div></div><div class="c" style="left:74px;width:110px;background:#323232"><div class="t" style="right:8.5px;text-align:right"><span class="s " style="transform:scaleX(0.92);transform-origin:right;letter-spacing:2.533px">2509</span></div></div><div class="c" style="left:186px;width:428px;background:#323232"><div class="t" style="left:10px"><span class="s " style="transform:scaleX(0.93);transform-origin:left;letter-spacing:1.994px">http:<i class="sl">/</i><i class="sl">/</i>www.jstor.org<i class="sl">/</i>stable<i class="sl">/</i>2085126</span></div></div><div class="c" style="left:616px;width:620px;background:#323232"><div class="t" style="left:10px"><span class="s" style="transform:scaleX(0.93);transform-origin:left;letter-spacing:1.443px">Internal Migration in Sweden and Intervening Opportu...</span></div></div><div class="c" style="left:1238px;width:334px;background:#323232"><div class="t" style="left:10px"><span class="s " style="transform:scaleX(0.93);transform-origin:left;letter-spacing:1.084px">American Sociological Review</span></div></div><div class="c" style="left:1574px;width:238px;background:#323232"><div class="t" style="right:8.8px;text-align:right"><span class="s " style="transform:scaleX(0.92);transform-origin:right;letter-spacing:2.3px">1944</span></div></div><div class="c" style="left:1814px;width:98px;background:#323232"></div><div class="c" style="left:1914px;width:155px;background:#323232"><div class="t" style="left:9px"><span class="s " style="transform:scaleX(0.93);transform-origin:left;letter-spacing:1.62px">article</span></div></div><div class="c" style="left:2071px;width:198px;background:#323232"><div class="t" style="left:9px"><span class="s " style="transform:scaleX(0.93);transform-origin:left;letter-spacing:1.25px">research<i class="dh"></i>article</span></div></div><div class="c" style="left:2271px;width:156px;background:#323232"><div class="t" style="left:9px"><span class="s " style="transform:scaleX(0.93);transform-origin:left;letter-spacing:2.667px">jstor</span></div></div><div class="c" style="left:2429px;width:169px;background:#323232"><div class="t na" style="left:10.7px"><span class="s " style="transform:scaleX(1.0);transform-origin:left;letter-spacing:0.3px">NA</span></div></div><div class="c" style="left:2600px;width:221px;background:#323232"><div class="t" style="left:10px"><span class="s " style="transform:scaleX(0.92);transform-origin:left;letter-spacing:2.5px">1944<i class="dh"></i>12<i class="dh"></i>01</span></div></div><div class="c" style="left:2823px;width:77px;background:#323232"></div></div>
<div class="a" style="left:0;top:520px;width:2866px;height:44px"><div class="c" style="left:4px;width:68px;background:#515b66"><div class="t" style="right:9px;text-align:right"><span class="s " style="transform:scaleX(0.92);transform-origin:right;letter-spacing:2.05px">523</span></div></div><div class="c" style="left:74px;width:110px;background:#373737"><div class="t" style="right:8.5px;text-align:right"><span class="s " style="transform:scaleX(0.92);transform-origin:right;letter-spacing:2.533px">2512</span></div></div><div class="c" style="left:186px;width:428px;background:#373737"><div class="t" style="left:10px"><span class="s " style="transform:scaleX(0.93);transform-origin:left;letter-spacing:1.994px">http:<i class="sl">/</i><i class="sl">/</i>www.jstor.org<i class="sl">/</i>stable<i class="sl">/</i>2085128</span></div></div><div class="c" style="left:616px;width:620px;background:#373737"><div class="t" style="left:10px"><span class="s" style="transform:scaleX(0.93);transform-origin:left;letter-spacing:0.986px">The Caste System of India</span></div></div><div class="c" style="left:1238px;width:334px;background:#373737"><div class="t" style="left:10px"><span class="s " style="transform:scaleX(0.93);transform-origin:left;letter-spacing:1.084px">American Sociological Review</span></div></div><div class="c" style="left:1574px;width:238px;background:#373737"><div class="t" style="right:8.8px;text-align:right"><span class="s " style="transform:scaleX(0.92);transform-origin:right;letter-spacing:2.3px">1944</span></div></div><div class="c" style="left:1814px;width:98px;background:#373737"></div><div class="c" style="left:1914px;width:155px;background:#373737"><div class="t" style="left:9px"><span class="s " style="transform:scaleX(0.93);transform-origin:left;letter-spacing:1.62px">article</span></div></div><div class="c" style="left:2071px;width:198px;background:#373737"><div class="t" style="left:9px"><span class="s " style="transform:scaleX(0.93);transform-origin:left;letter-spacing:1.25px">research<i class="dh"></i>article</span></div></div><div class="c" style="left:2271px;width:156px;background:#373737"><div class="t" style="left:9px"><span class="s " style="transform:scaleX(0.93);transform-origin:left;letter-spacing:2.667px">jstor</span></div></div><div class="c" style="left:2429px;width:169px;background:#373737"><div class="t na" style="left:10.7px"><span class="s " style="transform:scaleX(1.0);transform-origin:left;letter-spacing:0.3px">NA</span></div></div><div class="c" style="left:2600px;width:221px;background:#373737"><div class="t" style="left:10px"><span class="s " style="transform:scaleX(0.92);transform-origin:left;letter-spacing:2.5px">1944<i class="dh"></i>12<i class="dh"></i>01</span></div></div><div class="c" style="left:2823px;width:77px;background:#373737"></div></div>
<div class="a" style="left:0;top:566px;width:2866px;height:44px"><div class="c" style="left:4px;width:68px;background:#515b66"><div class="t" style="right:9px;text-align:right"><span class="s " style="transform:scaleX(0.92);transform-origin:right;letter-spacing:2.05px">524</span></div></div><div class="c" style="left:74px;width:110px;background:#323232"><div class="t" style="right:8.5px;text-align:right"><span class="s " style="transform:scaleX(0.92);transform-origin:right;letter-spacing:2.533px">2517</span></div></div><div class="c" style="left:186px;width:428px;background:#323232"><div class="t" style="left:10px"><span class="s " style="transform:scaleX(0.93);transform-origin:left;letter-spacing:1.994px">http:<i class="sl">/</i><i class="sl">/</i>www.jstor.org<i class="sl">/</i>stable<i class="sl">/</i>2085129</span></div></div><div class="c" style="left:616px;width:620px;background:#323232"><div class="t" style="left:10px"><span class="s" style="transform:scaleX(0.93);transform-origin:left;letter-spacing:1.402px">Attitudes of American Farmers–International and Prov...</span></div></div><div class="c" style="left:1238px;width:334px;background:#323232"><div class="t" style="left:10px"><span class="s " style="transform:scaleX(0.93);transform-origin:left;letter-spacing:1.084px">American Sociological Review</span></div></div><div class="c" style="left:1574px;width:238px;background:#323232"><div class="t" style="right:8.8px;text-align:right"><span class="s " style="transform:scaleX(0.92);transform-origin:right;letter-spacing:2.3px">1944</span></div></div><div class="c" style="left:1814px;width:98px;background:#323232"></div><div class="c" style="left:1914px;width:155px;background:#323232"><div class="t" style="left:9px"><span class="s " style="transform:scaleX(0.93);transform-origin:left;letter-spacing:1.62px">article</span></div></div><div class="c" style="left:2071px;width:198px;background:#323232"><div class="t" style="left:9px"><span class="s " style="transform:scaleX(0.93);transform-origin:left;letter-spacing:1.25px">research<i class="dh"></i>article</span></div></div><div class="c" style="left:2271px;width:156px;background:#323232"><div class="t" style="left:9px"><span class="s " style="transform:scaleX(0.93);transform-origin:left;letter-spacing:2.667px">jstor</span></div></div><div class="c" style="left:2429px;width:169px;background:#323232"><div class="t na" style="left:10.7px"><span class="s " style="transform:scaleX(1.0);transform-origin:left;letter-spacing:0.3px">NA</span></div></div><div class="c" style="left:2600px;width:221px;background:#323232"><div class="t" style="left:10px"><span class="s " style="transform:scaleX(0.92);transform-origin:left;letter-spacing:2.5px">1944<i class="dh"></i>12<i class="dh"></i>01</span></div></div><div class="c" style="left:2823px;width:77px;background:#323232"></div></div>
<div class="a" style="left:0;top:612px;width:2866px;height:44px"><div class="c" style="left:4px;width:68px;background:#515b66"><div class="t" style="right:9px;text-align:right"><span class="s " style="transform:scaleX(0.92);transform-origin:right;letter-spacing:2.05px">525</span></div></div><div class="c" style="left:74px;width:110px;background:#373737"><div class="t" style="right:8.5px;text-align:right"><span class="s " style="transform:scaleX(0.92);transform-origin:right;letter-spacing:2.533px">2531</span></div></div><div class="c" style="left:186px;width:428px;background:#373737"><div class="t" style="left:10px"><span class="s " style="transform:scaleX(0.93);transform-origin:left;letter-spacing:1.994px">http:<i class="sl">/</i><i class="sl">/</i>www.jstor.org<i class="sl">/</i>stable<i class="sl">/</i>2086119</span></div></div><div class="c" style="left:616px;width:620px;background:#373737"><div class="t" style="left:10px"><span class="s" style="transform:scaleX(0.93);transform-origin:left;letter-spacing:1.088px">Social Origin and Fame: The United States and England</span></div></div><div class="c" style="left:1238px;width:334px;background:#373737"><div class="t" style="left:10px"><span class="s " style="transform:scaleX(0.93);transform-origin:left;letter-spacing:1.084px">American Sociological Review</span></div></div><div class="c" style="left:1574px;width:238px;background:#373737"><div class="t" style="right:8.8px;text-align:right"><span class="s " style="transform:scaleX(0.92);transform-origin:right;letter-spacing:2.3px">1945</span></div></div><div class="c" style="left:1814px;width:98px;background:#373737"></div><div class="c" style="left:1914px;width:155px;background:#373737"><div class="t" style="left:9px"><span class="s " style="transform:scaleX(0.93);transform-origin:left;letter-spacing:1.62px">article</span></div></div><div class="c" style="left:2071px;width:198px;background:#373737"><div class="t" style="left:9px"><span class="s " style="transform:scaleX(0.93);transform-origin:left;letter-spacing:1.25px">research<i class="dh"></i>article</span></div></div><div class="c" style="left:2271px;width:156px;background:#373737"><div class="t" style="left:9px"><span class="s " style="transform:scaleX(0.93);transform-origin:left;letter-spacing:2.667px">jstor</span></div></div><div class="c" style="left:2429px;width:169px;background:#373737"><div class="t na" style="left:10.7px"><span class="s " style="transform:scaleX(1.0);transform-origin:left;letter-spacing:0.3px">NA</span></div></div><div class="c" style="left:2600px;width:221px;background:#373737"><div class="t" style="left:10px"><span class="s " style="transform:scaleX(0.92);transform-origin:left;letter-spacing:2.5px">1945<i class="dh"></i>02<i class="dh"></i>01</span></div></div><div class="c" style="left:2823px;width:77px;background:#373737"></div></div>
<div class="a" style="left:0;top:658px;width:2866px;height:44px"><div class="c" style="left:4px;width:68px;background:#515b66"><div class="t" style="right:9px;text-align:right"><span class="s " style="transform:scaleX(0.92);transform-origin:right;letter-spacing:2.05px">526</span></div></div><div class="c" style="left:74px;width:110px;background:#323232"><div class="t" style="right:8.5px;text-align:right"><span class="s " style="transform:scaleX(0.92);transform-origin:right;letter-spacing:2.533px">2538</span></div></div><div class="c" style="left:186px;width:428px;background:#323232"><div class="t" style="left:10px"><span class="s " style="transform:scaleX(0.93);transform-origin:left;letter-spacing:1.994px">http:<i class="sl">/</i><i class="sl">/</i>www.jstor.org<i class="sl">/</i>stable<i class="sl">/</i>2086113</span></div></div><div class="c" style="left:616px;width:620px;background:#323232"><div class="t" style="left:10px"><span class="s" style="transform:scaleX(0.93);transform-origin:left;letter-spacing:0.969px">Perspective on War</span></div></div><div class="c" style="left:1238px;width:334px;background:#323232"><div class="t" style="left:10px"><span class="s " style="transform:scaleX(0.93);transform-origin:left;letter-spacing:1.084px">American Sociological Review</span></div></div><div class="c" style="left:1574px;width:238px;background:#323232"><div class="t" style="right:8.8px;text-align:right"><span class="s " style="transform:scaleX(0.92);transform-origin:right;letter-spacing:2.3px">1945</span></div></div><div class="c" style="left:1814px;width:98px;background:#323232"></div><div class="c" style="left:1914px;width:155px;background:#323232"><div class="t" style="left:9px"><span class="s " style="transform:scaleX(0.93);transform-origin:left;letter-spacing:1.62px">article</span></div></div><div class="c" style="left:2071px;width:198px;background:#323232"><div class="t" style="left:9px"><span class="s " style="transform:scaleX(0.93);transform-origin:left;letter-spacing:1.25px">research<i class="dh"></i>article</span></div></div><div class="c" style="left:2271px;width:156px;background:#323232"><div class="t" style="left:9px"><span class="s " style="transform:scaleX(0.93);transform-origin:left;letter-spacing:2.667px">jstor</span></div></div><div class="c" style="left:2429px;width:169px;background:#323232"><div class="t na" style="left:10.7px"><span class="s " style="transform:scaleX(1.0);transform-origin:left;letter-spacing:0.3px">NA</span></div></div><div class="c" style="left:2600px;width:221px;background:#323232"><div class="t" style="left:10px"><span class="s " style="transform:scaleX(0.92);transform-origin:left;letter-spacing:2.5px">1945<i class="dh"></i>02<i class="dh"></i>01</span></div></div><div class="c" style="left:2823px;width:77px;background:#323232"></div></div>
<div class="a" style="left:0;top:704px;width:2866px;height:44px"><div class="c" style="left:4px;width:68px;background:#515b66"><div class="t" style="right:9px;text-align:right"><span class="s " style="transform:scaleX(0.92);transform-origin:right;letter-spacing:2.05px">527</span></div></div><div class="c" style="left:74px;width:110px;background:#373737"><div class="t" style="right:8.5px;text-align:right"><span class="s " style="transform:scaleX(0.92);transform-origin:right;letter-spacing:2.533px">2539</span></div></div><div class="c" style="left:186px;width:428px;background:#373737"><div class="t" style="left:10px"><span class="s " style="transform:scaleX(0.93);transform-origin:left;letter-spacing:1.994px">http:<i class="sl">/</i><i class="sl">/</i>www.jstor.org<i class="sl">/</i>stable<i class="sl">/</i>2086112</span></div></div><div class="c" style="left:616px;width:620px;background:#373737"><div class="t" style="left:10px"><span class="s" style="transform:scaleX(0.93);transform-origin:left;letter-spacing:1.232px">Principles of Social Interaction</span></div></div><div class="c" style="left:1238px;width:334px;background:#373737"><div class="t" style="left:10px"><span class="s " style="transform:scaleX(0.93);transform-origin:left;letter-spacing:1.084px">American Sociological Review</span></div></div><div class="c" style="left:1574px;width:238px;background:#373737"><div class="t" style="right:8.8px;text-align:right"><span class="s " style="transform:scaleX(0.92);transform-origin:right;letter-spacing:2.3px">1945</span></div></div><div class="c" style="left:1814px;width:98px;background:#373737"></div><div class="c" style="left:1914px;width:155px;background:#373737"><div class="t" style="left:9px"><span class="s " style="transform:scaleX(0.93);transform-origin:left;letter-spacing:1.62px">article</span></div></div><div class="c" style="left:2071px;width:198px;background:#373737"><div class="t" style="left:9px"><span class="s " style="transform:scaleX(0.93);transform-origin:left;letter-spacing:1.25px">research<i class="dh"></i>article</span></div></div><div class="c" style="left:2271px;width:156px;background:#373737"><div class="t" style="left:9px"><span class="s " style="transform:scaleX(0.93);transform-origin:left;letter-spacing:2.667px">jstor</span></div></div><div class="c" style="left:2429px;width:169px;background:#373737"><div class="t na" style="left:10.7px"><span class="s " style="transform:scaleX(1.0);transform-origin:left;letter-spacing:0.3px">NA</span></div></div><div class="c" style="left:2600px;width:221px;background:#373737"><div class="t" style="left:10px"><span class="s " style="transform:scaleX(0.92);transform-origin:left;letter-spacing:2.5px">1945<i class="dh"></i>02<i class="dh"></i>01</span></div></div><div class="c" style="left:2823px;width:77px;background:#373737"></div></div>
<div class="a" style="left:0;top:750px;width:2866px;height:44px"><div class="c" style="left:4px;width:68px;background:#515b66"><div class="t" style="right:9px;text-align:right"><span class="s " style="transform:scaleX(0.92);transform-origin:right;letter-spacing:2.05px">528</span></div></div><div class="c" style="left:74px;width:110px;background:#323232"><div class="t" style="right:8.5px;text-align:right"><span class="s " style="transform:scaleX(0.92);transform-origin:right;letter-spacing:2.533px">2541</span></div></div><div class="c" style="left:186px;width:428px;background:#323232"><div class="t" style="left:10px"><span class="s " style="transform:scaleX(0.93);transform-origin:left;letter-spacing:1.994px">http:<i class="sl">/</i><i class="sl">/</i>www.jstor.org<i class="sl">/</i>stable<i class="sl">/</i>2086114</span></div></div><div class="c" style="left:616px;width:620px;background:#323232"><div class="t" style="left:10px"><span class="s" style="transform:scaleX(0.93);transform-origin:left;letter-spacing:1.589px">Differential Mortality in Texas</span></div></div><div class="c" style="left:1238px;width:334px;background:#323232"><div class="t" style="left:10px"><span class="s " style="transform:scaleX(0.93);transform-origin:left;letter-spacing:1.084px">American Sociological Review</span></div></div><div class="c" style="left:1574px;width:238px;background:#323232"><div class="t" style="right:8.8px;text-align:right"><span class="s " style="transform:scaleX(0.92);transform-origin:right;letter-spacing:2.3px">1945</span></div></div><div class="c" style="left:1814px;width:98px;background:#323232"></div><div class="c" style="left:1914px;width:155px;background:#323232"><div class="t" style="left:9px"><span class="s " style="transform:scaleX(0.93);transform-origin:left;letter-spacing:1.62px">article</span></div></div><div class="c" style="left:2071px;width:198px;background:#323232"><div class="t" style="left:9px"><span class="s " style="transform:scaleX(0.93);transform-origin:left;letter-spacing:1.25px">research<i class="dh"></i>article</span></div></div><div class="c" style="left:2271px;width:156px;background:#323232"><div class="t" style="left:9px"><span class="s " style="transform:scaleX(0.93);transform-origin:left;letter-spacing:2.667px">jstor</span></div></div><div class="c" style="left:2429px;width:169px;background:#323232"><div class="t na" style="left:10.7px"><span class="s " style="transform:scaleX(1.0);transform-origin:left;letter-spacing:0.3px">NA</span></div></div><div class="c" style="left:2600px;width:221px;background:#323232"><div class="t" style="left:10px"><span class="s " style="transform:scaleX(0.92);transform-origin:left;letter-spacing:2.5px">1945<i class="dh"></i>02<i class="dh"></i>01</span></div></div><div class="c" style="left:2823px;width:77px;background:#323232"></div></div>
<div class="a" style="left:0;top:796px;width:2866px;height:44px"><div class="c" style="left:4px;width:68px;background:#515b66"><div class="t" style="right:9px;text-align:right"><span class="s " style="transform:scaleX(0.92);transform-origin:right;letter-spacing:2.05px">529</span></div></div><div class="c" style="left:74px;width:110px;background:#373737"><div class="t" style="right:8.5px;text-align:right"><span class="s " style="transform:scaleX(0.92);transform-origin:right;letter-spacing:2.533px">2543</span></div></div><div class="c" style="left:186px;width:428px;background:#373737"><div class="t" style="left:10px"><span class="s " style="transform:scaleX(0.93);transform-origin:left;letter-spacing:1.994px">http:<i class="sl">/</i><i class="sl">/</i>www.jstor.org<i class="sl">/</i>stable<i class="sl">/</i>2086116</span></div></div><div class="c" style="left:616px;width:620px;background:#373737"><div class="t" style="left:10px"><span class="s" style="transform:scaleX(0.93);transform-origin:left;letter-spacing:1.233px">A Comparative Analysis of the Class Struggle</span></div></div><div class="c" style="left:1238px;width:334px;background:#373737"><div class="t" style="left:10px"><span class="s " style="transform:scaleX(0.93);transform-origin:left;letter-spacing:1.084px">American Sociological Review</span></div></div><div class="c" style="left:1574px;width:238px;background:#373737"><div class="t" style="right:8.8px;text-align:right"><span class="s " style="transform:scaleX(0.92);transform-origin:right;letter-spacing:2.3px">1945</span></div></div><div class="c" style="left:1814px;width:98px;background:#373737"></div><div class="c" style="left:1914px;width:155px;background:#373737"><div class="t" style="left:9px"><span class="s " style="transform:scaleX(0.93);transform-origin:left;letter-spacing:1.62px">article</span></div></div><div class="c" style="left:2071px;width:198px;background:#373737"><div class="t" style="left:9px"><span class="s " style="transform:scaleX(0.93);transform-origin:left;letter-spacing:1.25px">research<i class="dh"></i>article</span></div></div><div class="c" style="left:2271px;width:156px;background:#373737"><div class="t" style="left:9px"><span class="s " style="transform:scaleX(0.93);transform-origin:left;letter-spacing:2.667px">jstor</span></div></div><div class="c" style="left:2429px;width:169px;background:#373737"><div class="t na" style="left:10.7px"><span class="s " style="transform:scaleX(1.0);transform-origin:left;letter-spacing:0.3px">NA</span></div></div><div class="c" style="left:2600px;width:221px;background:#373737"><div class="t" style="left:10px"><span class="s " style="transform:scaleX(0.92);transform-origin:left;letter-spacing:2.5px">1945<i class="dh"></i>02<i class="dh"></i>01</span></div></div><div class="c" style="left:2823px;width:77px;background:#373737"></div></div>
<div class="a" style="left:0;top:842px;width:2866px;height:44px"><div class="c" style="left:4px;width:68px;background:#515b66"><div class="t" style="right:9px;text-align:right"><span class="s " style="transform:scaleX(0.92);transform-origin:right;letter-spacing:2.05px">530</span></div></div><div class="c" style="left:74px;width:110px;background:#323232"><div class="t" style="right:8.5px;text-align:right"><span class="s " style="transform:scaleX(0.92);transform-origin:right;letter-spacing:2.533px">2544</span></div></div><div class="c" style="left:186px;width:428px;background:#323232"><div class="t" style="left:10px"><span class="s " style="transform:scaleX(0.93);transform-origin:left;letter-spacing:1.994px">http:<i class="sl">/</i><i class="sl">/</i>www.jstor.org<i class="sl">/</i>stable<i class="sl">/</i>2086115</span></div></div><div class="c" style="left:616px;width:620px;background:#323232"><div class="t" style="left:10px"><span class="s" style="transform:scaleX(0.93);transform-origin:left;letter-spacing:1.338px">A Comparison of Predicted with Actual Results of Pro...</span></div></div><div class="c" style="left:1238px;width:334px;background:#323232"><div class="t" style="left:10px"><span class="s " style="transform:scaleX(0.93);transform-origin:left;letter-spacing:1.084px">American Sociological Review</span></div></div><div class="c" style="left:1574px;width:238px;background:#323232"><div class="t" style="right:8.8px;text-align:right"><span class="s " style="transform:scaleX(0.92);transform-origin:right;letter-spacing:2.3px">1945</span></div></div><div class="c" style="left:1814px;width:98px;background:#323232"></div><div class="c" style="left:1914px;width:155px;background:#323232"><div class="t" style="left:9px"><span class="s " style="transform:scaleX(0.93);transform-origin:left;letter-spacing:1.62px">article</span></div></div><div class="c" style="left:2071px;width:198px;background:#323232"><div class="t" style="left:9px"><span class="s " style="transform:scaleX(0.93);transform-origin:left;letter-spacing:1.25px">research<i class="dh"></i>article</span></div></div><div class="c" style="left:2271px;width:156px;background:#323232"><div class="t" style="left:9px"><span class="s " style="transform:scaleX(0.93);transform-origin:left;letter-spacing:2.667px">jstor</span></div></div><div class="c" style="left:2429px;width:169px;background:#323232"><div class="t na" style="left:10.7px"><span class="s " style="transform:scaleX(1.0);transform-origin:left;letter-spacing:0.3px">NA</span></div></div><div class="c" style="left:2600px;width:221px;background:#323232"><div class="t" style="left:10px"><span class="s " style="transform:scaleX(0.92);transform-origin:left;letter-spacing:2.5px">1945<i class="dh"></i>02<i class="dh"></i>01</span></div></div><div class="c" style="left:2823px;width:77px;background:#323232"></div></div>
<div class="a" style="left:0;top:888px;width:2866px;height:44px"><div class="c" style="left:4px;width:68px;background:#515b66"><div class="t" style="right:9px;text-align:right"><span class="s " style="transform:scaleX(0.92);transform-origin:right;letter-spacing:2.05px">531</span></div></div><div class="c" style="left:74px;width:110px;background:#373737"><div class="t" style="right:8.5px;text-align:right"><span class="s " style="transform:scaleX(0.92);transform-origin:right;letter-spacing:2.533px">2546</span></div></div><div class="c" style="left:186px;width:428px;background:#373737"><div class="t" style="left:10px"><span class="s " style="transform:scaleX(0.93);transform-origin:left;letter-spacing:1.994px">http:<i class="sl">/</i><i class="sl">/</i>www.jstor.org<i class="sl">/</i>stable<i class="sl">/</i>2086117</span></div></div><div class="c" style="left:616px;width:620px;background:#373737"><div class="t" style="left:10px"><span class="s" style="transform:scaleX(0.93);transform-origin:left;letter-spacing:1.461px">The Assumed Isolation of China and Autochthony of ...</span></div></div><div class="c" style="left:1238px;width:334px;background:#373737"><div class="t" style="left:10px"><span class="s " style="transform:scaleX(0.93);transform-origin:left;letter-spacing:1.084px">American Sociological Review</span></div></div><div class="c" style="left:1574px;width:238px;background:#373737"><div class="t" style="right:8.8px;text-align:right"><span class="s " style="transform:scaleX(0.92);transform-origin:right;letter-spacing:2.3px">1945</span></div></div><div class="c" style="left:1814px;width:98px;background:#373737"></div><div class="c" style="left:1914px;width:155px;background:#373737"><div class="t" style="left:9px"><span class="s " style="transform:scaleX(0.93);transform-origin:left;letter-spacing:1.62px">article</span></div></div><div class="c" style="left:2071px;width:198px;background:#373737"><div class="t" style="left:9px"><span class="s " style="transform:scaleX(0.93);transform-origin:left;letter-spacing:1.25px">research<i class="dh"></i>article</span></div></div><div class="c" style="left:2271px;width:156px;background:#373737"><div class="t" style="left:9px"><span class="s " style="transform:scaleX(0.93);transform-origin:left;letter-spacing:2.667px">jstor</span></div></div><div class="c" style="left:2429px;width:169px;background:#373737"><div class="t na" style="left:10.7px"><span class="s " style="transform:scaleX(1.0);transform-origin:left;letter-spacing:0.3px">NA</span></div></div><div class="c" style="left:2600px;width:221px;background:#373737"><div class="t" style="left:10px"><span class="s " style="transform:scaleX(0.92);transform-origin:left;letter-spacing:2.5px">1945<i class="dh"></i>02<i class="dh"></i>01</span></div></div><div class="c" style="left:2823px;width:77px;background:#373737"></div></div>
<div class="a" style="left:0;top:934px;width:2866px;height:44px"><div class="c" style="left:4px;width:68px;background:#515b66"><div class="t" style="right:9px;text-align:right"><span class="s " style="transform:scaleX(0.92);transform-origin:right;letter-spacing:2.05px">532</span></div></div><div class="c" style="left:74px;width:110px;background:#323232"><div class="t" style="right:8.5px;text-align:right"><span class="s " style="transform:scaleX(0.92);transform-origin:right;letter-spacing:2.533px">2560</span></div></div><div class="c" style="left:186px;width:428px;background:#323232"><div class="t" style="left:10px"><span class="s " style="transform:scaleX(0.93);transform-origin:left;letter-spacing:1.994px">http:<i class="sl">/</i><i class="sl">/</i>www.jstor.org<i class="sl">/</i>stable<i class="sl">/</i>2086111</span></div></div><div class="c" style="left:616px;width:620px;background:#323232"><div class="t" style="left:10px"><span class="s" style="transform:scaleX(0.93);transform-origin:left;letter-spacing:1.151px">A Report on the War Research Laboratory in Hawaii</span></div></div><div class="c" style="left:1238px;width:334px;background:#323232"><div class="t" style="left:10px"><span class="s " style="transform:scaleX(0.93);transform-origin:left;letter-spacing:1.084px">American Sociological Review</span></div></div><div class="c" style="left:1574px;width:238px;background:#323232"><div class="t" style="right:8.8px;text-align:right"><span class="s " style="transform:scaleX(0.92);transform-origin:right;letter-spacing:2.3px">1945</span></div></div><div class="c" style="left:1814px;width:98px;background:#323232"></div><div class="c" style="left:1914px;width:155px;background:#323232"><div class="t" style="left:9px"><span class="s " style="transform:scaleX(0.93);transform-origin:left;letter-spacing:1.62px">article</span></div></div><div class="c" style="left:2071px;width:198px;background:#323232"><div class="t" style="left:9px"><span class="s " style="transform:scaleX(0.93);transform-origin:left;letter-spacing:1.25px">research<i class="dh"></i>article</span></div></div><div class="c" style="left:2271px;width:156px;background:#323232"><div class="t" style="left:9px"><span class="s " style="transform:scaleX(0.93);transform-origin:left;letter-spacing:2.667px">jstor</span></div></div><div class="c" style="left:2429px;width:169px;background:#323232"><div class="t na" style="left:10.7px"><span class="s " style="transform:scaleX(1.0);transform-origin:left;letter-spacing:0.3px">NA</span></div></div><div class="c" style="left:2600px;width:221px;background:#323232"><div class="t" style="left:10px"><span class="s " style="transform:scaleX(0.92);transform-origin:left;letter-spacing:2.5px">1945<i class="dh"></i>02<i class="dh"></i>01</span></div></div><div class="c" style="left:2823px;width:77px;background:#323232"></div></div>
<div class="a" style="left:0;top:980px;width:2866px;height:44px"><div class="c" style="left:4px;width:68px;background:#515b66"><div class="t" style="right:9px;text-align:right"><span class="s " style="transform:scaleX(0.92);transform-origin:right;letter-spacing:2.05px">533</span></div></div><div class="c" style="left:74px;width:110px;background:#373737"><div class="t" style="right:8.5px;text-align:right"><span class="s " style="transform:scaleX(0.92);transform-origin:right;letter-spacing:2.533px">2562</span></div></div><div class="c" style="left:186px;width:428px;background:#373737"><div class="t" style="left:10px"><span class="s " style="transform:scaleX(0.93);transform-origin:left;letter-spacing:1.994px">http:<i class="sl">/</i><i class="sl">/</i>www.jstor.org<i class="sl">/</i>stable<i class="sl">/</i>2086118</span></div></div><div class="c" style="left:616px;width:620px;background:#373737"><div class="t" style="left:10px"><span class="s" style="transform:scaleX(0.93);transform-origin:left;letter-spacing:1.402px">On the Amaziado Relationship, and Other Aspects of ...</span></div></div><div class="c" style="left:1238px;width:334px;background:#373737"><div class="t" style="left:10px"><span class="s " style="transform:scaleX(0.93);transform-origin:left;letter-spacing:1.084px">American Sociological Review</span></div></div><div class="c" style="left:1574px;width:238px;background:#373737"><div class="t" style="right:8.8px;text-align:right"><span class="s " style="transform:scaleX(0.92);transform-origin:right;letter-spacing:2.3px">1945</span></div></div><div class="c" style="left:1814px;width:98px;background:#373737"></div><div class="c" style="left:1914px;width:155px;background:#373737"><div class="t" style="left:9px"><span class="s " style="transform:scaleX(0.93);transform-origin:left;letter-spacing:1.62px">article</span></div></div><div class="c" style="left:2071px;width:198px;background:#373737"><div class="t" style="left:9px"><span class="s " style="transform:scaleX(0.93);transform-origin:left;letter-spacing:1.25px">research<i class="dh"></i>article</span></div></div><div class="c" style="left:2271px;width:156px;background:#373737"><div class="t" style="left:9px"><span class="s " style="transform:scaleX(0.93);transform-origin:left;letter-spacing:2.667px">jstor</span></div></div><div class="c" style="left:2429px;width:169px;background:#373737"><div class="t na" style="left:10.7px"><span class="s " style="transform:scaleX(1.0);transform-origin:left;letter-spacing:0.3px">NA</span></div></div><div class="c" style="left:2600px;width:221px;background:#373737"><div class="t" style="left:10px"><span class="s " style="transform:scaleX(0.92);transform-origin:left;letter-spacing:2.5px">1945<i class="dh"></i>02<i class="dh"></i>01</span></div></div><div class="c" style="left:2823px;width:77px;background:#373737"></div></div>
<div class="a" style="left:0;top:1026px;width:2866px;height:44px"><div class="c" style="left:4px;width:68px;background:#515b66"><div class="t" style="right:9px;text-align:right"><span class="s " style="transform:scaleX(0.92);transform-origin:right;letter-spacing:2.05px">534</span></div></div><div class="c" style="left:74px;width:110px;background:#323232"><div class="t" style="right:8.5px;text-align:right"><span class="s " style="transform:scaleX(0.92);transform-origin:right;letter-spacing:2.533px">2564</span></div></div><div class="c" style="left:186px;width:428px;background:#323232"><div class="t" style="left:10px"><span class="s " style="transform:scaleX(0.93);transform-origin:left;letter-spacing:1.994px">http:<i class="sl">/</i><i class="sl">/</i>www.jstor.org<i class="sl">/</i>stable<i class="sl">/</i>2085629</span></div></div><div class="c" style="left:616px;width:620px;background:#323232"><div class="t" style="left:10px"><span class="s" style="transform:scaleX(0.93);transform-origin:left;letter-spacing:1.193px">Sentiment and Symbolism as Ecological Variables</span></div></div><div class="c" style="left:1238px;width:334px;background:#323232"><div class="t" style="left:10px"><span class="s " style="transform:scaleX(0.93);transform-origin:left;letter-spacing:1.084px">American Sociological Review</span></div></div><div class="c" style="left:1574px;width:238px;background:#323232"><div class="t" style="right:8.8px;text-align:right"><span class="s " style="transform:scaleX(0.92);transform-origin:right;letter-spacing:2.3px">1945</span></div></div><div class="c" style="left:1814px;width:98px;background:#323232"></div><div class="c" style="left:1914px;width:155px;background:#323232"><div class="t" style="left:9px"><span class="s " style="transform:scaleX(0.93);transform-origin:left;letter-spacing:1.62px">article</span></div></div><div class="c" style="left:2071px;width:198px;background:#323232"><div class="t" style="left:9px"><span class="s " style="transform:scaleX(0.93);transform-origin:left;letter-spacing:1.25px">research<i class="dh"></i>article</span></div></div><div class="c" style="left:2271px;width:156px;background:#323232"><div class="t" style="left:9px"><span class="s " style="transform:scaleX(0.93);transform-origin:left;letter-spacing:2.667px">jstor</span></div></div><div class="c" style="left:2429px;width:169px;background:#323232"><div class="t na" style="left:10.7px"><span class="s " style="transform:scaleX(1.0);transform-origin:left;letter-spacing:0.3px">NA</span></div></div><div class="c" style="left:2600px;width:221px;background:#323232"><div class="t" style="left:10px"><span class="s " style="transform:scaleX(0.92);transform-origin:left;letter-spacing:2.5px">1945<i class="dh"></i>04<i class="dh"></i>01</span></div></div><div class="c" style="left:2823px;width:77px;background:#323232"></div></div>
<div class="a" style="left:0;top:1072px;width:2866px;height:44px"><div class="c" style="left:4px;width:68px;background:#515b66"><div class="t" style="right:9px;text-align:right"><span class="s " style="transform:scaleX(0.92);transform-origin:right;letter-spacing:2.05px">535</span></div></div><div class="c" style="left:74px;width:110px;background:#373737"><div class="t" style="right:8.5px;text-align:right"><span class="s " style="transform:scaleX(0.92);transform-origin:right;letter-spacing:2.533px">2569</span></div></div><div class="c" style="left:186px;width:428px;background:#373737"><div class="t" style="left:10px"><span class="s " style="transform:scaleX(0.93);transform-origin:left;letter-spacing:1.994px">http:<i class="sl">/</i><i class="sl">/</i>www.jstor.org<i class="sl">/</i>stable<i class="sl">/</i>2085648</span></div></div><div class="c" style="left:616px;width:620px;background:#373737"><div class="t" style="left:10px"><span class="s" style="transform:scaleX(0.93);transform-origin:left;letter-spacing:1.0px">Japanese Attitudes and Problems of Peace</span></div></div><div class="c" style="left:1238px;width:334px;background:#373737"><div class="t" style="left:10px"><span class="s " style="transform:scaleX(0.93);transform-origin:left;letter-spacing:1.084px">American Sociological Review</span></div></div><div class="c" style="left:1574px;width:238px;background:#373737"><div class="t" style="right:8.8px;text-align:right"><span class="s " style="transform:scaleX(0.92);transform-origin:right;letter-spacing:2.3px">1945</span></div></div><div class="c" style="left:1814px;width:98px;background:#373737"></div><div class="c" style="left:1914px;width:155px;background:#373737"><div class="t" style="left:9px"><span class="s " style="transform:scaleX(0.93);transform-origin:left;letter-spacing:1.62px">article</span></div></div><div class="c" style="left:2071px;width:198px;background:#373737"><div class="t" style="left:9px"><span class="s " style="transform:scaleX(0.93);transform-origin:left;letter-spacing:1.25px">research<i class="dh"></i>article</span></div></div><div class="c" style="left:2271px;width:156px;background:#373737"><div class="t" style="left:9px"><span class="s " style="transform:scaleX(0.93);transform-origin:left;letter-spacing:2.667px">jstor</span></div></div><div class="c" style="left:2429px;width:169px;background:#373737"><div class="t na" style="left:10.7px"><span class="s " style="transform:scaleX(1.0);transform-origin:left;letter-spacing:0.3px">NA</span></div></div><div class="c" style="left:2600px;width:221px;background:#373737"><div class="t" style="left:10px"><span class="s " style="transform:scaleX(0.92);transform-origin:left;letter-spacing:2.5px">1945<i class="dh"></i>04<i class="dh"></i>01</span></div></div><div class="c" style="left:2823px;width:77px;background:#373737"></div></div>
<div class="a" style="left:0;top:1118px;width:2866px;height:44px"><div class="c" style="left:4px;width:68px;background:#515b66"><div class="t" style="right:9px;text-align:right"><span class="s " style="transform:scaleX(0.92);transform-origin:right;letter-spacing:2.05px">536</span></div></div><div class="c" style="left:74px;width:110px;background:#323232"><div class="t" style="right:8.5px;text-align:right"><span class="s " style="transform:scaleX(0.92);transform-origin:right;letter-spacing:2.533px">2570</span></div></div><div class="c" style="left:186px;width:428px;background:#323232"><div class="t" style="left:10px"><span class="s " style="transform:scaleX(0.93);transform-origin:left;letter-spacing:1.994px">http:<i class="sl">/</i><i class="sl">/</i>www.jstor.org<i class="sl">/</i>stable<i class="sl">/</i>2085640</span></div></div><div class="c" style="left:616px;width:620px;background:#323232"><div class="t" style="left:10px"><span class="s" style="transform:scaleX(0.93);transform-origin:left;letter-spacing:1.65px">Taming the Lumberjack</span></div></div><div class="c" style="left:1238px;width:334px;background:#323232"><div class="t" style="left:10px"><span class="s " style="transform:scaleX(0.93);transform-origin:left;letter-spacing:1.084px">American Sociological Review</span></div></div><div class="c" style="left:1574px;width:238px;background:#323232"><div class="t" style="right:8.8px;text-align:right"><span class="s " style="transform:scaleX(0.92);transform-origin:right;letter-spacing:2.3px">1945</span></div></div><div class="c" style="left:1814px;width:98px;background:#323232"></div><div class="c" style="left:1914px;width:155px;background:#323232"><div class="t" style="left:9px"><span class="s " style="transform:scaleX(0.93);transform-origin:left;letter-spacing:1.62px">article</span></div></div><div class="c" style="left:2071px;width:198px;background:#323232"><div class="t" style="left:9px"><span class="s " style="transform:scaleX(0.93);transform-origin:left;letter-spacing:1.25px">research<i class="dh"></i>article</span></div></div><div class="c" style="left:2271px;width:156px;background:#323232"><div class="t" style="left:9px"><span class="s " style="transform:scaleX(0.93);transform-origin:left;letter-spacing:2.667px">jstor</span></div></div><div class="c" style="left:2429px;width:169px;background:#323232"><div class="t na" style="left:10.7px"><span class="s " style="transform:scaleX(1.0);transform-origin:left;letter-spacing:0.3px">NA</span></div></div><div class="c" style="left:2600px;width:221px;background:#323232"><div class="t" style="left:10px"><span class="s " style="transform:scaleX(0.92);transform-origin:left;letter-spacing:2.5px">1945<i class="dh"></i>04<i class="dh"></i>01</span></div></div><div class="c" style="left:2823px;width:77px;background:#323232"></div></div>
<div class="a" style="left:0;top:1164px;width:2866px;height:44px"><div class="c" style="left:4px;width:68px;background:#515b66"><div class="t" style="right:9px;text-align:right"><span class="s " style="transform:scaleX(0.92);transform-origin:right;letter-spacing:2.05px">537</span></div></div><div class="c" style="left:74px;width:110px;background:#373737"><div class="t" style="right:8.5px;text-align:right"><span class="s " style="transform:scaleX(0.92);transform-origin:right;letter-spacing:2.533px">2580</span></div></div><div class="c" style="left:186px;width:428px;background:#373737"><div class="t" style="left:10px"><span class="s " style="transform:scaleX(0.93);transform-origin:left;letter-spacing:1.994px">http:<i class="sl">/</i><i class="sl">/</i>www.jstor.org<i class="sl">/</i>stable<i class="sl">/</i>2085628</span></div></div><div class="c" style="left:616px;width:620px;background:#373737"><div class="t" style="left:10px"><span class="s" style="transform:scaleX(0.93);transform-origin:left;letter-spacing:1.093px">Is &quot;White Collar Crime&quot; Crime?</span></div></div><div class="c" style="left:1238px;width:334px;background:#373737"><div class="t" style="left:10px"><span class="s " style="transform:scaleX(0.93);transform-origin:left;letter-spacing:1.084px">American Sociological Review</span></div></div><div class="c" style="left:1574px;width:238px;background:#373737"><div class="t" style="right:8.8px;text-align:right"><span class="s " style="transform:scaleX(0.92);transform-origin:right;letter-spacing:2.3px">1945</span></div></div><div class="c" style="left:1814px;width:98px;background:#373737"></div><div class="c" style="left:1914px;width:155px;background:#373737"><div class="t" style="left:9px"><span class="s " style="transform:scaleX(0.93);transform-origin:left;letter-spacing:1.62px">article</span></div></div><div class="c" style="left:2071px;width:198px;background:#373737"><div class="t" style="left:9px"><span class="s " style="transform:scaleX(0.93);transform-origin:left;letter-spacing:1.25px">research<i class="dh"></i>article</span></div></div><div class="c" style="left:2271px;width:156px;background:#373737"><div class="t" style="left:9px"><span class="s " style="transform:scaleX(0.93);transform-origin:left;letter-spacing:2.667px">jstor</span></div></div><div class="c" style="left:2429px;width:169px;background:#373737"><div class="t na" style="left:10.7px"><span class="s " style="transform:scaleX(1.0);transform-origin:left;letter-spacing:0.3px">NA</span></div></div><div class="c" style="left:2600px;width:221px;background:#373737"><div class="t" style="left:10px"><span class="s " style="transform:scaleX(0.92);transform-origin:left;letter-spacing:2.5px">1945<i class="dh"></i>04<i class="dh"></i>01</span></div></div><div class="c" style="left:2823px;width:77px;background:#373737"></div></div>
<div class="a" style="left:0;top:1210px;width:2866px;height:44px"><div class="c" style="left:4px;width:68px;background:#515b66"><div class="t" style="right:9px;text-align:right"><span class="s " style="transform:scaleX(0.92);transform-origin:right;letter-spacing:2.05px">538</span></div></div><div class="c" style="left:74px;width:110px;background:#323232"><div class="t" style="right:8.5px;text-align:right"><span class="s " style="transform:scaleX(0.92);transform-origin:right;letter-spacing:2.533px">2581</span></div></div><div class="c" style="left:186px;width:428px;background:#323232"><div class="t" style="left:10px"><span class="s " style="transform:scaleX(0.93);transform-origin:left;letter-spacing:1.994px">http:<i class="sl">/</i><i class="sl">/</i>www.jstor.org<i class="sl">/</i>stable<i class="sl">/</i>2085635</span></div></div><div class="c" style="left:616px;width:620px;background:#323232"><div class="t" style="left:10px"><span class="s" style="transform:scaleX(0.93);transform-origin:left;letter-spacing:1.34px">A Methodological Note on the Empirical Establishmen...</span></div></div><div class="c" style="left:1238px;width:334px;background:#323232"><div class="t" style="left:10px"><span class="s " style="transform:scaleX(0.93);transform-origin:left;letter-spacing:1.084px">American Sociological Review</span></div></div><div class="c" style="left:1574px;width:238px;background:#323232"><div class="t" style="right:8.8px;text-align:right"><span class="s " style="transform:scaleX(0.92);transform-origin:right;letter-spacing:2.3px">1945</span></div></div><div class="c" style="left:1814px;width:98px;background:#323232"></div><div class="c" style="left:1914px;width:155px;background:#323232"><div class="t" style="left:9px"><span class="s " style="transform:scaleX(0.93);transform-origin:left;letter-spacing:1.62px">article</span></div></div><div class="c" style="left:2071px;width:198px;background:#323232"><div class="t" style="left:9px"><span class="s " style="transform:scaleX(0.93);transform-origin:left;letter-spacing:1.25px">research<i class="dh"></i>article</span></div></div><div class="c" style="left:2271px;width:156px;background:#323232"><div class="t" style="left:9px"><span class="s " style="transform:scaleX(0.93);transform-origin:left;letter-spacing:2.667px">jstor</span></div></div><div class="c" style="left:2429px;width:169px;background:#323232"><div class="t na" style="left:10.7px"><span class="s " style="transform:scaleX(1.0);transform-origin:left;letter-spacing:0.3px">NA</span></div></div><div class="c" style="left:2600px;width:221px;background:#323232"><div class="t" style="left:10px"><span class="s " style="transform:scaleX(0.92);transform-origin:left;letter-spacing:2.5px">1945<i class="dh"></i>04<i class="dh"></i>01</span></div></div><div class="c" style="left:2823px;width:77px;background:#323232"></div></div>
<div class="a" style="left:0;top:1256px;width:2866px;height:44px"><div class="c" style="left:4px;width:68px;background:#515b66"><div class="t" style="right:9px;text-align:right"><span class="s " style="transform:scaleX(0.92);transform-origin:right;letter-spacing:2.05px">539</span></div></div><div class="c" style="left:74px;width:110px;background:#373737"><div class="t" style="right:8.5px;text-align:right"><span class="s " style="transform:scaleX(0.92);transform-origin:right;letter-spacing:2.533px">2584</span></div></div><div class="c" style="left:186px;width:428px;background:#373737"><div class="t" style="left:10px"><span class="s " style="transform:scaleX(0.93);transform-origin:left;letter-spacing:1.994px">http:<i class="sl">/</i><i class="sl">/</i>www.jstor.org<i class="sl">/</i>stable<i class="sl">/</i>2085630</span></div></div><div class="c" style="left:616px;width:620px;background:#373737"><div class="t" style="left:10px"><span class="s" style="transform:scaleX(0.93);transform-origin:left;letter-spacing:1.232px">A Cooperative Health Association in Spanish Speaking...</span></div></div><div class="c" style="left:1238px;width:334px;background:#373737"><div class="t" style="left:10px"><span class="s " style="transform:scaleX(0.93);transform-origin:left;letter-spacing:1.084px">American Sociological Review</span></div></div><div class="c" style="left:1574px;width:238px;background:#373737"><div class="t" style="right:8.8px;text-align:right"><span class="s " style="transform:scaleX(0.92);transform-origin:right;letter-spacing:2.3px">1945</span></div></div><div class="c" style="left:1814px;width:98px;background:#373737"></div><div class="c" style="left:1914px;width:155px;background:#373737"><div class="t" style="left:9px"><span class="s " style="transform:scaleX(0.93);transform-origin:left;letter-spacing:1.62px">article</span></div></div><div class="c" style="left:2071px;width:198px;background:#373737"><div class="t" style="left:9px"><span class="s " style="transform:scaleX(0.93);transform-origin:left;letter-spacing:1.25px">research<i class="dh"></i>article</span></div></div><div class="c" style="left:2271px;width:156px;background:#373737"><div class="t" style="left:9px"><span class="s " style="transform:scaleX(0.93);transform-origin:left;letter-spacing:2.667px">jstor</span></div></div><div class="c" style="left:2429px;width:169px;background:#373737"><div class="t na" style="left:10.7px"><span class="s " style="transform:scaleX(1.0);transform-origin:left;letter-spacing:0.3px">NA</span></div></div><div class="c" style="left:2600px;width:221px;background:#373737"><div class="t" style="left:10px"><span class="s " style="transform:scaleX(0.92);transform-origin:left;letter-spacing:2.5px">1945<i class="dh"></i>04<i class="dh"></i>01</span></div></div><div class="c" style="left:2823px;width:77px;background:#373737"></div></div>
<div class="a" style="left:0;top:1302px;width:2866px;height:44px"><div class="c" style="left:4px;width:68px;background:#515b66"><div class="t" style="right:9px;text-align:right"><span class="s " style="transform:scaleX(0.92);transform-origin:right;letter-spacing:2.05px">540</span></div></div><div class="c" style="left:74px;width:110px;background:#323232"><div class="t" style="right:8.5px;text-align:right"><span class="s " style="transform:scaleX(0.92);transform-origin:right;letter-spacing:2.533px">2588</span></div></div><div class="c" style="left:186px;width:428px;background:#323232"><div class="t" style="left:10px"><span class="s " style="transform:scaleX(0.93);transform-origin:left;letter-spacing:1.994px">http:<i class="sl">/</i><i class="sl">/</i>www.jstor.org<i class="sl">/</i>stable<i class="sl">/</i>2085642</span></div></div><div class="c" style="left:616px;width:620px;background:#323232"><div class="t" style="left:10px"><span class="s" style="transform:scaleX(0.93);transform-origin:left;letter-spacing:1.164px">The Stepchild</span></div></div><div class="c" style="left:1238px;width:334px;background:#323232"><div class="t" style="left:10px"><span class="s " style="transform:scaleX(0.93);transform-origin:left;letter-spacing:1.084px">American Sociological Review</span></div></div><div class="c" style="left:1574px;width:238px;background:#323232"><div class="t" style="right:8.8px;text-align:right"><span class="s " style="transform:scaleX(0.92);transform-origin:right;letter-spacing:2.3px">1945</span></div></div><div class="c" style="left:1814px;width:98px;background:#323232"></div><div class="c" style="left:1914px;width:155px;background:#323232"><div class="t" style="left:9px"><span class="s " style="transform:scaleX(0.93);transform-origin:left;letter-spacing:1.62px">article</span></div></div><div class="c" style="left:2071px;width:198px;background:#323232"><div class="t" style="left:9px"><span class="s " style="transform:scaleX(0.93);transform-origin:left;letter-spacing:1.25px">research<i class="dh"></i>article</span></div></div><div class="c" style="left:2271px;width:156px;background:#323232"><div class="t" style="left:9px"><span class="s " style="transform:scaleX(0.93);transform-origin:left;letter-spacing:2.667px">jstor</span></div></div><div class="c" style="left:2429px;width:169px;background:#323232"><div class="t na" style="left:10.7px"><span class="s " style="transform:scaleX(1.0);transform-origin:left;letter-spacing:0.3px">NA</span></div></div><div class="c" style="left:2600px;width:221px;background:#323232"><div class="t" style="left:10px"><span class="s " style="transform:scaleX(0.92);transform-origin:left;letter-spacing:2.5px">1945<i class="dh"></i>04<i class="dh"></i>01</span></div></div><div class="c" style="left:2823px;width:77px;background:#323232"></div></div>
<div class="a" style="left:0;top:1348px;width:2866px;height:44px"><div class="c" style="left:4px;width:68px;background:#515b66"><div class="t" style="right:9px;text-align:right"><span class="s " style="transform:scaleX(0.92);transform-origin:right;letter-spacing:2.05px">541</span></div></div><div class="c" style="left:74px;width:110px;background:#373737"><div class="t" style="right:8.5px;text-align:right"><span class="s " style="transform:scaleX(0.92);transform-origin:right;letter-spacing:2.533px">2592</span></div></div><div class="c" style="left:186px;width:428px;background:#373737"><div class="t" style="left:10px"><span class="s " style="transform:scaleX(0.93);transform-origin:left;letter-spacing:1.994px">http:<i class="sl">/</i><i class="sl">/</i>www.jstor.org<i class="sl">/</i>stable<i class="sl">/</i>2085645</span></div></div><div class="c" style="left:616px;width:620px;background:#373737"><div class="t" style="left:10px"><span class="s" style="transform:scaleX(0.93);transform-origin:left;letter-spacing:1.244px">Prediction of Political Behavior in America</span></div></div><div class="c" style="left:1238px;width:334px;background:#373737"><div class="t" style="left:10px"><span class="s " style="transform:scaleX(0.93);transform-origin:left;letter-spacing:1.084px">American Sociological Review</span></div></div><div class="c" style="left:1574px;width:238px;background:#373737"><div class="t" style="right:8.8px;text-align:right"><span class="s " style="transform:scaleX(0.92);transform-origin:right;letter-spacing:2.3px">1945</span></div></div><div class="c" style="left:1814px;width:98px;background:#373737"></div><div class="c" style="left:1914px;width:155px;background:#373737"><div class="t" style="left:9px"><span class="s " style="transform:scaleX(0.93);transform-origin:left;letter-spacing:1.62px">article</span></div></div><div class="c" style="left:2071px;width:198px;background:#373737"><div class="t" style="left:9px"><span class="s " style="transform:scaleX(0.93);transform-origin:left;letter-spacing:1.25px">research<i class="dh"></i>article</span></div></div><div class="c" style="left:2271px;width:156px;background:#373737"><div class="t" style="left:9px"><span class="s " style="transform:scaleX(0.93);transform-origin:left;letter-spacing:2.667px">jstor</span></div></div><div class="c" style="left:2429px;width:169px;background:#373737"><div class="t na" style="left:10.7px"><span class="s " style="transform:scaleX(1.0);transform-origin:left;letter-spacing:0.3px">NA</span></div></div><div class="c" style="left:2600px;width:221px;background:#373737"><div class="t" style="left:10px"><span class="s " style="transform:scaleX(0.92);transform-origin:left;letter-spacing:2.5px">1945<i class="dh"></i>04<i class="dh"></i>01</span></div></div><div class="c" style="left:2823px;width:77px;background:#373737"></div></div>
<div class="a" style="left:0;top:1394px;width:2866px;height:44px"><div class="c" style="left:4px;width:68px;background:#515b66"><div class="t" style="right:9px;text-align:right"><span class="s " style="transform:scaleX(0.92);transform-origin:right;letter-spacing:2.05px">542</span></div></div><div class="c" style="left:74px;width:110px;background:#323232"><div class="t" style="right:8.5px;text-align:right"><span class="s " style="transform:scaleX(0.92);transform-origin:right;letter-spacing:2.533px">2595</span></div></div><div class="c" style="left:186px;width:428px;background:#323232"><div class="t" style="left:10px"><span class="s " style="transform:scaleX(0.93);transform-origin:left;letter-spacing:1.994px">http:<i class="sl">/</i><i class="sl">/</i>www.jstor.org<i class="sl">/</i>stable<i class="sl">/</i>2085634</span></div></div><div class="c" style="left:616px;width:620px;background:#323232"><div class="t" style="left:10px"><span class="s" style="transform:scaleX(0.93);transform-origin:left;letter-spacing:1.446px">Impact of the War on Minnesota Communities: with R...</span></div></div><div class="c" style="left:1238px;width:334px;background:#323232"><div class="t" style="left:10px"><span class="s " style="transform:scaleX(0.93);transform-origin:left;letter-spacing:1.084px">American Sociological Review</span></div></div><div class="c" style="left:1574px;width:238px;background:#323232"><div class="t" style="right:8.8px;text-align:right"><span class="s " style="transform:scaleX(0.92);transform-origin:right;letter-spacing:2.3px">1945</span></div></div><div class="c" style="left:1814px;width:98px;background:#323232"></div><div class="c" style="left:1914px;width:155px;background:#323232"><div class="t" style="left:9px"><span class="s " style="transform:scaleX(0.93);transform-origin:left;letter-spacing:1.62px">article</span></div></div><div class="c" style="left:2071px;width:198px;background:#323232"><div class="t" style="left:9px"><span class="s " style="transform:scaleX(0.93);transform-origin:left;letter-spacing:1.25px">research<i class="dh"></i>article</span></div></div><div class="c" style="left:2271px;width:156px;background:#323232"><div class="t" style="left:9px"><span class="s " style="transform:scaleX(0.93);transform-origin:left;letter-spacing:2.667px">jstor</span></div></div><div class="c" style="left:2429px;width:169px;background:#323232"><div class="t na" style="left:10.7px"><span class="s " style="transform:scaleX(1.0);transform-origin:left;letter-spacing:0.3px">NA</span></div></div><div class="c" style="left:2600px;width:221px;background:#323232"><div class="t" style="left:10px"><span class="s " style="transform:scaleX(0.92);transform-origin:left;letter-spacing:2.5px">1945<i class="dh"></i>04<i class="dh"></i>01</span></div></div><div class="c" style="left:2823px;width:77px;background:#323232"></div></div>
<div class="a" style="left:0;top:1440px;width:2866px;height:44px"><div class="c" style="left:4px;width:68px;background:#515b66"><div class="t" style="right:9px;text-align:right"><span class="s " style="transform:scaleX(0.92);transform-origin:right;letter-spacing:2.05px">543</span></div></div><div class="c" style="left:74px;width:110px;background:#373737"><div class="t" style="right:8.5px;text-align:right"><span class="s " style="transform:scaleX(0.92);transform-origin:right;letter-spacing:2.533px">2596</span></div></div><div class="c" style="left:186px;width:428px;background:#373737"><div class="t" style="left:10px"><span class="s " style="transform:scaleX(0.93);transform-origin:left;letter-spacing:1.994px">http:<i class="sl">/</i><i class="sl">/</i>www.jstor.org<i class="sl">/</i>stable<i class="sl">/</i>2085646</span></div></div><div class="c" style="left:616px;width:620px;background:#373737"><div class="t" style="left:10px"><span class="s" style="transform:scaleX(0.93);transform-origin:left;letter-spacing:1.361px">Economic Limits of International Resettlement</span></div></div><div class="c" style="left:1238px;width:334px;background:#373737"><div class="t" style="left:10px"><span class="s " style="transform:scaleX(0.93);transform-origin:left;letter-spacing:1.084px">American Sociological Review</span></div></div><div class="c" style="left:1574px;width:238px;background:#373737"><div class="t" style="right:8.8px;text-align:right"><span class="s " style="transform:scaleX(0.92);transform-origin:right;letter-spacing:2.3px">1945</span></div></div><div class="c" style="left:1814px;width:98px;background:#373737"></div><div class="c" style="left:1914px;width:155px;background:#373737"><div class="t" style="left:9px"><span class="s " style="transform:scaleX(0.93);transform-origin:left;letter-spacing:1.62px">article</span></div></div><div class="c" style="left:2071px;width:198px;background:#373737"><div class="t" style="left:9px"><span class="s " style="transform:scaleX(0.93);transform-origin:left;letter-spacing:1.25px">research<i class="dh"></i>article</span></div></div><div class="c" style="left:2271px;width:156px;background:#373737"><div class="t" style="left:9px"><span class="s " style="transform:scaleX(0.93);transform-origin:left;letter-spacing:2.667px">jstor</span></div></div><div class="c" style="left:2429px;width:169px;background:#373737"><div class="t na" style="left:10.7px"><span class="s " style="transform:scaleX(1.0);transform-origin:left;letter-spacing:0.3px">NA</span></div></div><div class="c" style="left:2600px;width:221px;background:#373737"><div class="t" style="left:10px"><span class="s " style="transform:scaleX(0.92);transform-origin:left;letter-spacing:2.5px">1945<i class="dh"></i>04<i class="dh"></i>01</span></div></div><div class="c" style="left:2823px;width:77px;background:#373737"></div></div>
<div class="a" style="left:0;top:1486px;width:2866px;height:44px"><div class="c" style="left:4px;width:68px;background:#515b66"><div class="t" style="right:9px;text-align:right"><span class="s " style="transform:scaleX(0.92);transform-origin:right;letter-spacing:2.05px">544</span></div></div><div class="c" style="left:74px;width:110px;background:#323232"><div class="t" style="right:8.5px;text-align:right"><span class="s " style="transform:scaleX(0.92);transform-origin:right;letter-spacing:2.533px">2600</span></div></div><div class="c" style="left:186px;width:428px;background:#323232"><div class="t" style="left:10px"><span class="s " style="transform:scaleX(0.93);transform-origin:left;letter-spacing:1.994px">http:<i class="sl">/</i><i class="sl">/</i>www.jstor.org<i class="sl">/</i>stable<i class="sl">/</i>2085600</span></div></div><div class="c" style="left:616px;width:620px;background:#323232"><div class="t" style="left:10px"><span class="s" style="transform:scaleX(0.93);transform-origin:left;letter-spacing:1.2px"></span></div></div><div class="c" style="left:1238px;width:334px;background:#323232"><div class="t" style="left:10px"><span class="s " style="transform:scaleX(0.93);transform-origin:left;letter-spacing:1.084px">American Sociological Review</span></div></div><div class="c" style="left:1574px;width:238px;background:#323232"><div class="t" style="right:8.8px;text-align:right"><span class="s " style="transform:scaleX(0.92);transform-origin:right;letter-spacing:2.3px">1945</span></div></div><div class="c" style="left:1814px;width:98px;background:#323232"></div><div class="c" style="left:1914px;width:155px;background:#323232"><div class="t" style="left:9px"><span class="s " style="transform:scaleX(0.93);transform-origin:left;letter-spacing:1.62px">article</span></div></div><div class="c" style="left:2071px;width:198px;background:#323232"><div class="t" style="left:9px"><span class="s " style="transform:scaleX(0.93);transform-origin:left;letter-spacing:1.25px">research<i class="dh"></i>article</span></div></div><div class="c" style="left:2271px;width:156px;background:#323232"><div class="t" style="left:9px"><span class="s " style="transform:scaleX(0.93);transform-origin:left;letter-spacing:2.667px">jstor</span></div></div><div class="c" style="left:2429px;width:169px;background:#323232"><div class="t na" style="left:10.7px"><span class="s " style="transform:scaleX(1.0);transform-origin:left;letter-spacing:0.3px">NA</span></div></div><div class="c" style="left:2600px;width:221px;background:#323232"><div class="t" style="left:10px"><span class="s " style="transform:scaleX(0.92);transform-origin:left;letter-spacing:2.5px">1945<i class="dh"></i>04<i class="dh"></i>01</span></div></div><div class="c" style="left:2823px;width:77px;background:#323232"></div></div>
<div class="a" style="left:249.2px;top:0;width:2.6px;height:1.7px;background:#fff;border-radius:0 0 1px 1px"></div>
<div class="a" style="left:260.6px;top:0;width:2.6px;height:1.7px;background:#fff;border-radius:0 0 1px 1px"></div>
<div class="a" style="left:422.2px;top:0;width:2.6px;height:1.7px;background:#fff;border-radius:0 0 1px 1px"></div>
<div class="a" style="left:497.6px;top:0;width:2.6px;height:1.7px;background:#fff;border-radius:0 0 1px 1px"></div>
</div>
</div></body></html>
